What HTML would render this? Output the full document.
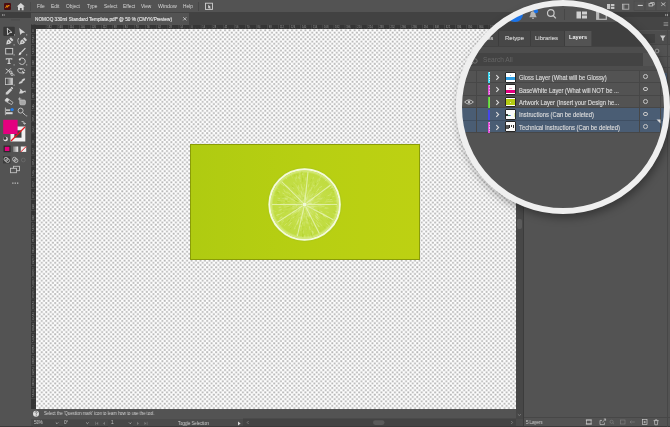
<!DOCTYPE html>
<html><head><meta charset="utf-8">
<style>
*{margin:0;padding:0;box-sizing:border-box}
html,body{width:670px;height:427px;overflow:hidden;background:#535353}
body{font-family:"Liberation Sans",sans-serif;color:#d6d6d6;position:relative}
.a{position:absolute}
.t{position:absolute;white-space:nowrap;line-height:1;will-change:transform}
</style></head><body>

<!-- menubar -->
<div class="a" style="left:0;top:0;width:670px;height:12px;background:#535353"></div>
<svg class="a" style="left:0;top:0" width="31" height="12" viewBox="0 0 31 12">
<rect x="4" y="3" width="7" height="7" rx="1" fill="#4a0d12"/>
<path d="M5.6 8 L6.9 5.4 L7.6 7.3 L8.6 5 L9.6 6.2" fill="none" stroke="#ff9a00" stroke-width="0.9"/>
<path d="M20.8 3 L16.8 6.6 H18 V10.2 H19.9 V8 H21.7 V10.2 H23.6 V6.6 H24.8 Z" fill="#d8d8d8"/>
</svg>
<div class="a" style="left:30.2px;top:2px;width:0.8px;height:8.5px;background:#4a4a4a"></div>
<div class="t" style="left:37px;top:4.9px;font-size:4.8px;transform:scaleY(1.15);transform-origin:0 100%">File</div>
<div class="t" style="left:51px;top:4.9px;font-size:4.8px;transform:scaleY(1.15);transform-origin:0 100%">Edit</div>
<div class="t" style="left:66px;top:4.9px;font-size:4.8px;transform:scaleY(1.15);transform-origin:0 100%">Object</div>
<div class="t" style="left:87px;top:4.9px;font-size:4.8px;transform:scaleY(1.15);transform-origin:0 100%">Type</div>
<div class="t" style="left:104px;top:4.9px;font-size:4.8px;transform:scaleY(1.15);transform-origin:0 100%">Select</div>
<div class="t" style="left:122.8px;top:4.9px;font-size:4.8px;transform:scaleY(1.15);transform-origin:0 100%">Effect</div>
<div class="t" style="left:141px;top:4.9px;font-size:4.8px;transform:scaleY(1.15);transform-origin:0 100%">View</div>
<div class="t" style="left:158px;top:4.9px;font-size:4.8px;transform:scale(1.1,1.15);transform-origin:0 100%">Window</div>
<div class="t" style="left:183px;top:4.9px;font-size:4.8px;transform:scaleY(1.15);transform-origin:0 100%">Help</div>
<div class="a" style="left:197.5px;top:1.5px;width:0.8px;height:9px;background:#474747"></div>
<svg class="a" style="left:203.6px;top:2px" width="10" height="9" viewBox="0 0 10 9"><rect x="1.5" y="1.2" width="7" height="6.2" fill="none" stroke="#cfcfcf" stroke-width="0.9"/><path d="M4.2 2.8 L4.2 6.6 L5.1 5.7 L6 7.2 L6.6 6.9 L5.9 5.4 L7 5.3 Z" fill="#cfcfcf"/></svg>
<svg class="a" style="left:600px;top:0" width="70" height="12" viewBox="600 0 70 12">
<g fill="#c8c8c8"><rect x="607" y="4" width="3.2" height="5"/><rect x="611" y="4" width="3.4" height="2.2"/><rect x="611" y="6.9" width="3.4" height="2.1"/></g>
<g fill="none" stroke="#b8b8b8" stroke-width="0.8"><rect x="622.4" y="4.2" width="6.4" height="5"/><path d="M623.8 4.2 V9.2"/></g>
<g fill="none" stroke="#474747" stroke-width="0.5"><rect x="634" y="1" width="11" height="9.5"/><rect x="645" y="1" width="11" height="9.5"/><rect x="656" y="1" width="11" height="9.5"/></g>
<rect x="637.8" y="4.9" width="5" height="1.1" fill="#c8c8c8"/>
<g fill="none" stroke="#c8c8c8" stroke-width="0.8"><rect x="649" y="3.6" width="3.6" height="2.4"/><path d="M650.6 3.6 V2.6 H654.2 V5 H652.6"/><path d="M661.2 2.6 L665.4 5.8 M665.4 2.6 L661.2 5.8"/></g>
</svg>

<!-- toolbar -->
<div class="a" style="left:0;top:12px;width:30.5px;height:415px;background:#535353"></div>
<div class="a" style="left:0;top:12px;width:30.5px;height:5.5px;background:#3e3e3e"></div>
<div class="a" style="left:30.5px;top:12px;width:1px;height:415px;background:#3b3b3b"></div>

<svg class="a" style="left:0;top:0" width="31" height="200" viewBox="0 0 31 200">
<defs>
<linearGradient id="gr1"><stop offset="0" stop-color="#303030"/><stop offset="1" stop-color="#d8d8d8"/></linearGradient>
<linearGradient id="gr2"><stop offset="0" stop-color="#777"/><stop offset="1" stop-color="#f0f0f0"/></linearGradient>
<g id="nib"><path d="M0 0 L-2.1 -3.2 L-2.1 -5.6 H2.1 L2.1 -3.2 Z" fill="#d4d4d4"/><rect x="-1.9" y="-8.4" width="3.8" height="2.1" rx="0.4" fill="#d4d4d4"/><circle cx="0" cy="-3.4" r="0.6" fill="#535353"/></g>
</defs>
<g fill="#bdbdbd"><path d="M2.2 14 L3.4 15 L2.2 16 Z"/><path d="M3.8 14 L5 15 L3.8 16 Z"/></g>
<rect x="11" y="19.6" width="9" height="0.7" fill="#474747"/>
<rect x="3.3" y="26.7" width="11.5" height="9.2" rx="1" fill="#383838"/>
<path d="M7.3 28.2 L11.9 32.4 L9.4 32.7 L7.7 34.8 Z" fill="#2c2c2c" stroke="#d8d8d8" stroke-width="0.9" stroke-linejoin="round"/>
<path d="M19.2 28.1 L25.2 32.6 L22.1 32.9 L20.2 35 Z" fill="#d4d4d4"/>
<use href="#nib" transform="translate(6.2 44.6) rotate(45)"/>
<use href="#nib" transform="translate(19.8 44.6) rotate(45)"/>
<path d="M18.6 38 Q17 40.5 18.2 42.5 Q19 44 19.6 44.6" fill="none" stroke="#c8c8c8" stroke-width="0.8"/>
<rect x="5.7" y="48.4" width="7" height="5.6" fill="#4a4a4a" stroke="#cfcfcf" stroke-width="0.9"/>
<path d="M25 47.8 L25.8 48.6 L21.8 52.8 L20.8 51.9 Z" fill="#d4d4d4"/><path d="M20.6 52 L21.6 53 Q21 55.3 18.6 55.2 Q18.8 52.6 20.6 52 Z" fill="#e0e0e0"/>
<path d="M5.8 58.2 H12.3 V59.8 H11.4 V59.3 H9.7 V63 H10.6 V64 H7.5 V63 H8.4 V59.3 H6.7 V59.8 H5.8 Z" fill="#d4d4d4"/>
<path d="M19.4 59.4 A3.2 3.2 0 1 1 19.2 62.8" fill="none" stroke="#c8c8c8" stroke-width="1"/><circle cx="19.8" cy="59.6" r="1" fill="#e0e0e0"/>
<g fill="none" stroke="#d0d0d0" stroke-width="0.9"><circle cx="10.8" cy="72.2" r="1.2"/><circle cx="12" cy="74.4" r="1.1"/><path d="M5.8 69 L10 71.6 M5.8 73.6 L11 68.2"/></g>
<g fill="none" stroke="#c8c8c8" stroke-width="0.9"><path d="M22 68.8 Q17 67.6 17.8 71 Q18.6 73.4 22 73"/><path d="M20 69.4 Q24.6 67.6 24.8 71"/></g>
<path d="M22 70.6 L25.2 73 L23.7 73.2 L22.8 74.6 Z" fill="#e0e0e0"/>
<rect x="5.4" y="78.2" width="7" height="6.4" fill="url(#gr1)" stroke="#c8c8c8" stroke-width="0.8"/>
<path d="M18.6 84 L19.6 81.8 L21.4 81.2 L21.8 79.8 L23.8 78.6 L25.2 78.4 L24.8 80 L22.8 81.6 L22.2 83 L20.4 83.4 Z" fill="#d0d0d0"/>
<path d="M5.6 94.6 L6 92.6 L10.4 88.2 L12.2 90 L7.8 94.4 Z" fill="#cfcfcf"/><path d="M10.8 87.8 L11.8 86.8 L13.2 88.2 L12.2 89.2 Z" fill="#e0e0e0"/>
<path d="M19 93.6 L20.4 90 L19.6 88.4 L21.4 89.4 L23 91.2 L25.4 90.6 L26 92.4 L24.4 92 L22.2 93.4 Z" fill="#d0d0d0"/>
<path d="M5.4 99.4 L7 98 L13 102.4 L11.6 104.6 L5.2 101 Z" fill="none" stroke="#c8c8c8" stroke-width="0.8"/><path d="M5.4 99.4 L7 98 L9.4 99.8 L7.8 102 L5.2 101 Z" fill="#d8d8d8"/>
<path d="M19.6 97.4 V100.8 M18 99 H21.4" stroke="#c8c8c8" stroke-width="0.8"/><rect x="19.8" y="100" width="5.6" height="4.8" rx="1.2" fill="#a8a8a8" stroke="#c8c8c8" stroke-width="0.7"/>
<path d="M5.4 107.6 V115.2" stroke="#c8c8c8" stroke-width="0.8"/><rect x="6" y="109.4" width="4.2" height="1.4" fill="#d4d4d4"/><rect x="6" y="112.2" width="6.6" height="2" fill="#d4d4d4"/>
<circle cx="12.1" cy="109.6" r="1.7" fill="#2680eb"/>
<circle cx="20.6" cy="110.6" r="2.5" fill="none" stroke="#c8c8c8" stroke-width="0.9"/><path d="M22.5 112.5 L25.6 115.4" stroke="#c8c8c8" stroke-width="1"/>
<g fill="#c8c8c8"><rect x="14" y="34.4" width="1" height="1"/><rect x="26.2" y="34.4" width="1" height="1"/><rect x="13.6" y="44.4" width="1" height="1"/><rect x="13.6" y="54.4" width="1" height="1"/><rect x="26.2" y="54.4" width="1" height="1"/><rect x="13.6" y="64.4" width="1" height="1"/><rect x="26.2" y="64.4" width="1" height="1"/><rect x="13.6" y="74.6" width="1" height="1"/><rect x="13.6" y="84.6" width="1" height="1"/><rect x="26.2" y="115.4" width="1" height="1"/></g>
<!-- fill / stroke -->
<rect x="10.5" y="126.5" width="14.8" height="15" fill="#f0f0f0"/>
<rect x="14.3" y="130.3" width="7.2" height="7.4" fill="#424242"/>
<path d="M11 141 L25 127" stroke="#e8141c" stroke-width="1.2"/>
<rect x="3.2" y="119.8" width="14.4" height="14.2" fill="#e4007f"/>
<g fill="none" stroke="#c8c8c8" stroke-width="0.9"><path d="M21.6 121.5 Q24.5 121 24.6 124 M23.4 123 L24.6 124.4 L25.8 123"/></g>
<circle cx="5.6" cy="139" r="2.3" fill="#e0e0e0"/><circle cx="5" cy="138.4" r="1.4" fill="#333"/>
<rect x="3.6" y="145.6" width="7" height="6.6" fill="#2a2a2a"/><rect x="4.8" y="146.8" width="4.6" height="4.2" fill="#e4007f"/>
<rect x="13" y="146.5" width="5.2" height="5.4" fill="url(#gr2)"/>
<rect x="20.8" y="146.5" width="5.4" height="5.4" fill="#f0f0f0"/><path d="M20.8 151.9 L26.2 146.5" stroke="#e8141c" stroke-width="1"/>
<rect x="3" y="156.2" width="7.6" height="7.2" fill="#3c3c3c"/>
<g fill="none" stroke="#c8c8c8" stroke-width="0.8"><circle cx="6" cy="159.2" r="1.9"/><circle cx="7.6" cy="160.6" r="1.9"/><circle cx="14.4" cy="159.2" r="1.9"/><circle cx="16" cy="160.6" r="1.9"/></g>
<circle cx="23.3" cy="160" r="1.9" fill="none" stroke="#707070" stroke-width="0.7"/>
<g fill="none" stroke="#c0c0c0" stroke-width="0.9"><rect x="13.5" y="166.3" width="6" height="4.4"/><rect x="10.5" y="168.3" width="6" height="4.4" fill="#535353"/></g>
<g fill="#bdbdbd"><rect x="12.2" y="182.5" width="1.3" height="1.3"/><rect x="14.6" y="182.5" width="1.3" height="1.3"/><rect x="17" y="182.5" width="1.3" height="1.3"/></g>
</svg>
<!-- doc tab bar -->
<div class="a" style="left:31px;top:12px;width:491px;height:12.5px;background:#424242"></div>
<div class="a" style="left:31px;top:12.5px;width:157.5px;height:12px;background:#535353"></div>
<div class="t" style="left:35px;top:17.6px;font-size:4.72px;color:#e6e6e6;-webkit-text-stroke:0.12px #e6e6e6;transform:scaleY(1.12);transform-origin:0 100%">NOMOQ 330ml Standard Template.pdf* @ 50 % (CMYK/Preview)</div>
<svg class="a" style="left:181.5px;top:15.8px" width="6" height="6" viewBox="0 0 6 6"><path d="M1.2 1.2 L4.4 4.4 M4.4 1.2 L1.2 4.4" stroke="#e0e0e0" stroke-width="0.7"/></svg>

<!-- rulers -->
<div class="a" style="left:31px;top:24.5px;width:485px;height:4.5px;background:#353535"></div>
<div class="a" style="left:31px;top:24.5px;width:4.5px;height:384.5px;background:#353535"></div>
<svg class="a" style="left:0;top:0" width="520" height="410" viewBox="0 0 520 410">
<g><rect x="45.84" y="24.5" width="0.5" height="5" fill="#5a5a5a"/><rect x="48.66" y="28" width="0.4" height="1.0" fill="#505050"/><rect x="51.42" y="27.4" width="0.4" height="1.6" fill="#505050"/><rect x="54.19" y="28" width="0.4" height="1.0" fill="#505050"/><rect x="56.91" y="24.5" width="0.5" height="5" fill="#5a5a5a"/><rect x="59.73" y="28" width="0.4" height="1.0" fill="#505050"/><rect x="62.49" y="27.4" width="0.4" height="1.6" fill="#505050"/><rect x="65.26" y="28" width="0.4" height="1.0" fill="#505050"/><rect x="67.98" y="24.5" width="0.5" height="5" fill="#5a5a5a"/><rect x="70.80" y="28" width="0.4" height="1.0" fill="#505050"/><rect x="73.56" y="27.4" width="0.4" height="1.6" fill="#505050"/><rect x="76.33" y="28" width="0.4" height="1.0" fill="#505050"/><rect x="79.05" y="24.5" width="0.5" height="5" fill="#5a5a5a"/><rect x="81.87" y="28" width="0.4" height="1.0" fill="#505050"/><rect x="84.63" y="27.4" width="0.4" height="1.6" fill="#505050"/><rect x="87.40" y="28" width="0.4" height="1.0" fill="#505050"/><rect x="90.12" y="24.5" width="0.5" height="5" fill="#5a5a5a"/><rect x="92.94" y="28" width="0.4" height="1.0" fill="#505050"/><rect x="95.70" y="27.4" width="0.4" height="1.6" fill="#505050"/><rect x="98.47" y="28" width="0.4" height="1.0" fill="#505050"/><rect x="101.19" y="24.5" width="0.5" height="5" fill="#5a5a5a"/><rect x="104.01" y="28" width="0.4" height="1.0" fill="#505050"/><rect x="106.77" y="27.4" width="0.4" height="1.6" fill="#505050"/><rect x="109.54" y="28" width="0.4" height="1.0" fill="#505050"/><rect x="112.26" y="24.5" width="0.5" height="5" fill="#5a5a5a"/><rect x="115.08" y="28" width="0.4" height="1.0" fill="#505050"/><rect x="117.84" y="27.4" width="0.4" height="1.6" fill="#505050"/><rect x="120.61" y="28" width="0.4" height="1.0" fill="#505050"/><rect x="123.33" y="24.5" width="0.5" height="5" fill="#5a5a5a"/><rect x="126.15" y="28" width="0.4" height="1.0" fill="#505050"/><rect x="128.92" y="27.4" width="0.4" height="1.6" fill="#505050"/><rect x="131.68" y="28" width="0.4" height="1.0" fill="#505050"/><rect x="134.40" y="24.5" width="0.5" height="5" fill="#5a5a5a"/><rect x="137.22" y="28" width="0.4" height="1.0" fill="#505050"/><rect x="139.99" y="27.4" width="0.4" height="1.6" fill="#505050"/><rect x="142.75" y="28" width="0.4" height="1.0" fill="#505050"/><rect x="145.47" y="24.5" width="0.5" height="5" fill="#5a5a5a"/><rect x="148.29" y="28" width="0.4" height="1.0" fill="#505050"/><rect x="151.06" y="27.4" width="0.4" height="1.6" fill="#505050"/><rect x="153.82" y="28" width="0.4" height="1.0" fill="#505050"/><rect x="156.54" y="24.5" width="0.5" height="5" fill="#5a5a5a"/><rect x="159.36" y="28" width="0.4" height="1.0" fill="#505050"/><rect x="162.12" y="27.4" width="0.4" height="1.6" fill="#505050"/><rect x="164.89" y="28" width="0.4" height="1.0" fill="#505050"/><rect x="167.61" y="24.5" width="0.5" height="5" fill="#5a5a5a"/><rect x="170.43" y="28" width="0.4" height="1.0" fill="#505050"/><rect x="173.20" y="27.4" width="0.4" height="1.6" fill="#505050"/><rect x="175.96" y="28" width="0.4" height="1.0" fill="#505050"/><rect x="178.68" y="24.5" width="0.5" height="5" fill="#5a5a5a"/><rect x="181.50" y="28" width="0.4" height="1.0" fill="#505050"/><rect x="184.27" y="27.4" width="0.4" height="1.6" fill="#505050"/><rect x="187.03" y="28" width="0.4" height="1.0" fill="#505050"/><rect x="189.75" y="24.5" width="0.5" height="5" fill="#5a5a5a"/><rect x="192.57" y="28" width="0.4" height="1.0" fill="#505050"/><rect x="195.34" y="27.4" width="0.4" height="1.6" fill="#505050"/><rect x="198.10" y="28" width="0.4" height="1.0" fill="#505050"/><rect x="200.82" y="24.5" width="0.5" height="5" fill="#5a5a5a"/><rect x="203.64" y="28" width="0.4" height="1.0" fill="#505050"/><rect x="206.41" y="27.4" width="0.4" height="1.6" fill="#505050"/><rect x="209.17" y="28" width="0.4" height="1.0" fill="#505050"/><rect x="211.89" y="24.5" width="0.5" height="5" fill="#5a5a5a"/><rect x="214.71" y="28" width="0.4" height="1.0" fill="#505050"/><rect x="217.47" y="27.4" width="0.4" height="1.6" fill="#505050"/><rect x="220.24" y="28" width="0.4" height="1.0" fill="#505050"/><rect x="222.96" y="24.5" width="0.5" height="5" fill="#5a5a5a"/><rect x="225.78" y="28" width="0.4" height="1.0" fill="#505050"/><rect x="228.55" y="27.4" width="0.4" height="1.6" fill="#505050"/><rect x="231.31" y="28" width="0.4" height="1.0" fill="#505050"/><rect x="234.03" y="24.5" width="0.5" height="5" fill="#5a5a5a"/><rect x="236.85" y="28" width="0.4" height="1.0" fill="#505050"/><rect x="239.62" y="27.4" width="0.4" height="1.6" fill="#505050"/><rect x="242.38" y="28" width="0.4" height="1.0" fill="#505050"/><rect x="245.10" y="24.5" width="0.5" height="5" fill="#5a5a5a"/><rect x="247.92" y="28" width="0.4" height="1.0" fill="#505050"/><rect x="250.69" y="27.4" width="0.4" height="1.6" fill="#505050"/><rect x="253.45" y="28" width="0.4" height="1.0" fill="#505050"/><rect x="256.17" y="24.5" width="0.5" height="5" fill="#5a5a5a"/><rect x="258.99" y="28" width="0.4" height="1.0" fill="#505050"/><rect x="261.76" y="27.4" width="0.4" height="1.6" fill="#505050"/><rect x="264.52" y="28" width="0.4" height="1.0" fill="#505050"/><rect x="267.24" y="24.5" width="0.5" height="5" fill="#5a5a5a"/><rect x="270.06" y="28" width="0.4" height="1.0" fill="#505050"/><rect x="272.83" y="27.4" width="0.4" height="1.6" fill="#505050"/><rect x="275.59" y="28" width="0.4" height="1.0" fill="#505050"/><rect x="278.31" y="24.5" width="0.5" height="5" fill="#5a5a5a"/><rect x="281.13" y="28" width="0.4" height="1.0" fill="#505050"/><rect x="283.90" y="27.4" width="0.4" height="1.6" fill="#505050"/><rect x="286.66" y="28" width="0.4" height="1.0" fill="#505050"/><rect x="289.38" y="24.5" width="0.5" height="5" fill="#5a5a5a"/><rect x="292.20" y="28" width="0.4" height="1.0" fill="#505050"/><rect x="294.97" y="27.4" width="0.4" height="1.6" fill="#505050"/><rect x="297.73" y="28" width="0.4" height="1.0" fill="#505050"/><rect x="300.45" y="24.5" width="0.5" height="5" fill="#5a5a5a"/><rect x="303.27" y="28" width="0.4" height="1.0" fill="#505050"/><rect x="306.04" y="27.4" width="0.4" height="1.6" fill="#505050"/><rect x="308.80" y="28" width="0.4" height="1.0" fill="#505050"/><rect x="311.52" y="24.5" width="0.5" height="5" fill="#5a5a5a"/><rect x="314.34" y="28" width="0.4" height="1.0" fill="#505050"/><rect x="317.11" y="27.4" width="0.4" height="1.6" fill="#505050"/><rect x="319.87" y="28" width="0.4" height="1.0" fill="#505050"/><rect x="322.59" y="24.5" width="0.5" height="5" fill="#5a5a5a"/><rect x="325.41" y="28" width="0.4" height="1.0" fill="#505050"/><rect x="328.18" y="27.4" width="0.4" height="1.6" fill="#505050"/><rect x="330.94" y="28" width="0.4" height="1.0" fill="#505050"/><rect x="333.66" y="24.5" width="0.5" height="5" fill="#5a5a5a"/><rect x="336.48" y="28" width="0.4" height="1.0" fill="#505050"/><rect x="339.25" y="27.4" width="0.4" height="1.6" fill="#505050"/><rect x="342.01" y="28" width="0.4" height="1.0" fill="#505050"/><rect x="344.73" y="24.5" width="0.5" height="5" fill="#5a5a5a"/><rect x="347.55" y="28" width="0.4" height="1.0" fill="#505050"/><rect x="350.32" y="27.4" width="0.4" height="1.6" fill="#505050"/><rect x="353.08" y="28" width="0.4" height="1.0" fill="#505050"/><rect x="355.80" y="24.5" width="0.5" height="5" fill="#5a5a5a"/><rect x="358.62" y="28" width="0.4" height="1.0" fill="#505050"/><rect x="361.39" y="27.4" width="0.4" height="1.6" fill="#505050"/><rect x="364.15" y="28" width="0.4" height="1.0" fill="#505050"/><rect x="366.87" y="24.5" width="0.5" height="5" fill="#5a5a5a"/><rect x="369.69" y="28" width="0.4" height="1.0" fill="#505050"/><rect x="372.46" y="27.4" width="0.4" height="1.6" fill="#505050"/><rect x="375.22" y="28" width="0.4" height="1.0" fill="#505050"/><rect x="377.94" y="24.5" width="0.5" height="5" fill="#5a5a5a"/><rect x="380.76" y="28" width="0.4" height="1.0" fill="#505050"/><rect x="383.53" y="27.4" width="0.4" height="1.6" fill="#505050"/><rect x="386.29" y="28" width="0.4" height="1.0" fill="#505050"/><rect x="389.01" y="24.5" width="0.5" height="5" fill="#5a5a5a"/><rect x="391.83" y="28" width="0.4" height="1.0" fill="#505050"/><rect x="394.60" y="27.4" width="0.4" height="1.6" fill="#505050"/><rect x="397.36" y="28" width="0.4" height="1.0" fill="#505050"/><rect x="400.08" y="24.5" width="0.5" height="5" fill="#5a5a5a"/><rect x="402.90" y="28" width="0.4" height="1.0" fill="#505050"/><rect x="405.67" y="27.4" width="0.4" height="1.6" fill="#505050"/><rect x="408.43" y="28" width="0.4" height="1.0" fill="#505050"/><rect x="411.15" y="24.5" width="0.5" height="5" fill="#5a5a5a"/><rect x="413.97" y="28" width="0.4" height="1.0" fill="#505050"/><rect x="416.74" y="27.4" width="0.4" height="1.6" fill="#505050"/><rect x="419.50" y="28" width="0.4" height="1.0" fill="#505050"/><rect x="422.22" y="24.5" width="0.5" height="5" fill="#5a5a5a"/><rect x="425.04" y="28" width="0.4" height="1.0" fill="#505050"/><rect x="427.81" y="27.4" width="0.4" height="1.6" fill="#505050"/><rect x="430.57" y="28" width="0.4" height="1.0" fill="#505050"/><rect x="433.29" y="24.5" width="0.5" height="5" fill="#5a5a5a"/><rect x="436.11" y="28" width="0.4" height="1.0" fill="#505050"/><rect x="438.88" y="27.4" width="0.4" height="1.6" fill="#505050"/><rect x="441.64" y="28" width="0.4" height="1.0" fill="#505050"/><rect x="444.36" y="24.5" width="0.5" height="5" fill="#5a5a5a"/><rect x="447.18" y="28" width="0.4" height="1.0" fill="#505050"/><rect x="449.95" y="27.4" width="0.4" height="1.6" fill="#505050"/><rect x="452.71" y="28" width="0.4" height="1.0" fill="#505050"/><rect x="455.43" y="24.5" width="0.5" height="5" fill="#5a5a5a"/><rect x="458.25" y="28" width="0.4" height="1.0" fill="#505050"/><rect x="461.02" y="27.4" width="0.4" height="1.6" fill="#505050"/><rect x="463.78" y="28" width="0.4" height="1.0" fill="#505050"/><rect x="466.50" y="24.5" width="0.5" height="5" fill="#5a5a5a"/><rect x="469.32" y="28" width="0.4" height="1.0" fill="#505050"/><rect x="472.09" y="27.4" width="0.4" height="1.6" fill="#505050"/><rect x="474.85" y="28" width="0.4" height="1.0" fill="#505050"/><rect x="477.57" y="24.5" width="0.5" height="5" fill="#5a5a5a"/><rect x="480.39" y="28" width="0.4" height="1.0" fill="#505050"/><rect x="483.16" y="27.4" width="0.4" height="1.6" fill="#505050"/><rect x="485.92" y="28" width="0.4" height="1.0" fill="#505050"/><rect x="488.64" y="24.5" width="0.5" height="5" fill="#5a5a5a"/><rect x="491.46" y="28" width="0.4" height="1.0" fill="#505050"/><rect x="494.23" y="27.4" width="0.4" height="1.6" fill="#505050"/><rect x="496.99" y="28" width="0.4" height="1.0" fill="#505050"/><rect x="499.71" y="24.5" width="0.5" height="5" fill="#5a5a5a"/><rect x="502.53" y="28" width="0.4" height="1.0" fill="#505050"/><rect x="505.30" y="27.4" width="0.4" height="1.6" fill="#505050"/><rect x="508.06" y="28" width="0.4" height="1.0" fill="#505050"/><rect x="510.78" y="24.5" width="0.5" height="5" fill="#5a5a5a"/><rect x="513.60" y="28" width="0.4" height="1.0" fill="#505050"/><rect x="31" y="33.05" width="4.5" height="0.5" fill="#5a5a5a"/><rect x="34.5" y="35.87" width="1.0" height="0.4" fill="#505050"/><rect x="33.9" y="38.63" width="1.6" height="0.4" fill="#505050"/><rect x="34.5" y="41.40" width="1.0" height="0.4" fill="#505050"/><rect x="31" y="44.12" width="4.5" height="0.5" fill="#5a5a5a"/><rect x="34.5" y="46.94" width="1.0" height="0.4" fill="#505050"/><rect x="33.9" y="49.70" width="1.6" height="0.4" fill="#505050"/><rect x="34.5" y="52.47" width="1.0" height="0.4" fill="#505050"/><rect x="31" y="55.19" width="4.5" height="0.5" fill="#5a5a5a"/><rect x="34.5" y="58.01" width="1.0" height="0.4" fill="#505050"/><rect x="33.9" y="60.77" width="1.6" height="0.4" fill="#505050"/><rect x="34.5" y="63.54" width="1.0" height="0.4" fill="#505050"/><rect x="31" y="66.26" width="4.5" height="0.5" fill="#5a5a5a"/><rect x="34.5" y="69.08" width="1.0" height="0.4" fill="#505050"/><rect x="33.9" y="71.84" width="1.6" height="0.4" fill="#505050"/><rect x="34.5" y="74.61" width="1.0" height="0.4" fill="#505050"/><rect x="31" y="77.33" width="4.5" height="0.5" fill="#5a5a5a"/><rect x="34.5" y="80.15" width="1.0" height="0.4" fill="#505050"/><rect x="33.9" y="82.91" width="1.6" height="0.4" fill="#505050"/><rect x="34.5" y="85.68" width="1.0" height="0.4" fill="#505050"/><rect x="31" y="88.40" width="4.5" height="0.5" fill="#5a5a5a"/><rect x="34.5" y="91.22" width="1.0" height="0.4" fill="#505050"/><rect x="33.9" y="93.98" width="1.6" height="0.4" fill="#505050"/><rect x="34.5" y="96.75" width="1.0" height="0.4" fill="#505050"/><rect x="31" y="99.47" width="4.5" height="0.5" fill="#5a5a5a"/><rect x="34.5" y="102.29" width="1.0" height="0.4" fill="#505050"/><rect x="33.9" y="105.05" width="1.6" height="0.4" fill="#505050"/><rect x="34.5" y="107.82" width="1.0" height="0.4" fill="#505050"/><rect x="31" y="110.54" width="4.5" height="0.5" fill="#5a5a5a"/><rect x="34.5" y="113.36" width="1.0" height="0.4" fill="#505050"/><rect x="33.9" y="116.12" width="1.6" height="0.4" fill="#505050"/><rect x="34.5" y="118.89" width="1.0" height="0.4" fill="#505050"/><rect x="31" y="121.61" width="4.5" height="0.5" fill="#5a5a5a"/><rect x="34.5" y="124.43" width="1.0" height="0.4" fill="#505050"/><rect x="33.9" y="127.19" width="1.6" height="0.4" fill="#505050"/><rect x="34.5" y="129.96" width="1.0" height="0.4" fill="#505050"/><rect x="31" y="132.68" width="4.5" height="0.5" fill="#5a5a5a"/><rect x="34.5" y="135.50" width="1.0" height="0.4" fill="#505050"/><rect x="33.9" y="138.27" width="1.6" height="0.4" fill="#505050"/><rect x="34.5" y="141.03" width="1.0" height="0.4" fill="#505050"/><rect x="31" y="143.75" width="4.5" height="0.5" fill="#5a5a5a"/><rect x="34.5" y="146.57" width="1.0" height="0.4" fill="#505050"/><rect x="33.9" y="149.34" width="1.6" height="0.4" fill="#505050"/><rect x="34.5" y="152.10" width="1.0" height="0.4" fill="#505050"/><rect x="31" y="154.82" width="4.5" height="0.5" fill="#5a5a5a"/><rect x="34.5" y="157.64" width="1.0" height="0.4" fill="#505050"/><rect x="33.9" y="160.41" width="1.6" height="0.4" fill="#505050"/><rect x="34.5" y="163.17" width="1.0" height="0.4" fill="#505050"/><rect x="31" y="165.89" width="4.5" height="0.5" fill="#5a5a5a"/><rect x="34.5" y="168.71" width="1.0" height="0.4" fill="#505050"/><rect x="33.9" y="171.47" width="1.6" height="0.4" fill="#505050"/><rect x="34.5" y="174.24" width="1.0" height="0.4" fill="#505050"/><rect x="31" y="176.96" width="4.5" height="0.5" fill="#5a5a5a"/><rect x="34.5" y="179.78" width="1.0" height="0.4" fill="#505050"/><rect x="33.9" y="182.55" width="1.6" height="0.4" fill="#505050"/><rect x="34.5" y="185.31" width="1.0" height="0.4" fill="#505050"/><rect x="31" y="188.03" width="4.5" height="0.5" fill="#5a5a5a"/><rect x="34.5" y="190.85" width="1.0" height="0.4" fill="#505050"/><rect x="33.9" y="193.62" width="1.6" height="0.4" fill="#505050"/><rect x="34.5" y="196.38" width="1.0" height="0.4" fill="#505050"/><rect x="31" y="199.10" width="4.5" height="0.5" fill="#5a5a5a"/><rect x="34.5" y="201.92" width="1.0" height="0.4" fill="#505050"/><rect x="33.9" y="204.69" width="1.6" height="0.4" fill="#505050"/><rect x="34.5" y="207.45" width="1.0" height="0.4" fill="#505050"/><rect x="31" y="210.17" width="4.5" height="0.5" fill="#5a5a5a"/><rect x="34.5" y="212.99" width="1.0" height="0.4" fill="#505050"/><rect x="33.9" y="215.76" width="1.6" height="0.4" fill="#505050"/><rect x="34.5" y="218.52" width="1.0" height="0.4" fill="#505050"/><rect x="31" y="221.24" width="4.5" height="0.5" fill="#5a5a5a"/><rect x="34.5" y="224.06" width="1.0" height="0.4" fill="#505050"/><rect x="33.9" y="226.83" width="1.6" height="0.4" fill="#505050"/><rect x="34.5" y="229.59" width="1.0" height="0.4" fill="#505050"/><rect x="31" y="232.31" width="4.5" height="0.5" fill="#5a5a5a"/><rect x="34.5" y="235.13" width="1.0" height="0.4" fill="#505050"/><rect x="33.9" y="237.90" width="1.6" height="0.4" fill="#505050"/><rect x="34.5" y="240.66" width="1.0" height="0.4" fill="#505050"/><rect x="31" y="243.38" width="4.5" height="0.5" fill="#5a5a5a"/><rect x="34.5" y="246.20" width="1.0" height="0.4" fill="#505050"/><rect x="33.9" y="248.97" width="1.6" height="0.4" fill="#505050"/><rect x="34.5" y="251.73" width="1.0" height="0.4" fill="#505050"/><rect x="31" y="254.45" width="4.5" height="0.5" fill="#5a5a5a"/><rect x="34.5" y="257.27" width="1.0" height="0.4" fill="#505050"/><rect x="33.9" y="260.04" width="1.6" height="0.4" fill="#505050"/><rect x="34.5" y="262.80" width="1.0" height="0.4" fill="#505050"/><rect x="31" y="265.52" width="4.5" height="0.5" fill="#5a5a5a"/><rect x="34.5" y="268.34" width="1.0" height="0.4" fill="#505050"/><rect x="33.9" y="271.11" width="1.6" height="0.4" fill="#505050"/><rect x="34.5" y="273.87" width="1.0" height="0.4" fill="#505050"/><rect x="31" y="276.59" width="4.5" height="0.5" fill="#5a5a5a"/><rect x="34.5" y="279.41" width="1.0" height="0.4" fill="#505050"/><rect x="33.9" y="282.18" width="1.6" height="0.4" fill="#505050"/><rect x="34.5" y="284.94" width="1.0" height="0.4" fill="#505050"/><rect x="31" y="287.66" width="4.5" height="0.5" fill="#5a5a5a"/><rect x="34.5" y="290.48" width="1.0" height="0.4" fill="#505050"/><rect x="33.9" y="293.25" width="1.6" height="0.4" fill="#505050"/><rect x="34.5" y="296.01" width="1.0" height="0.4" fill="#505050"/><rect x="31" y="298.73" width="4.5" height="0.5" fill="#5a5a5a"/><rect x="34.5" y="301.55" width="1.0" height="0.4" fill="#505050"/><rect x="33.9" y="304.32" width="1.6" height="0.4" fill="#505050"/><rect x="34.5" y="307.08" width="1.0" height="0.4" fill="#505050"/><rect x="31" y="309.80" width="4.5" height="0.5" fill="#5a5a5a"/><rect x="34.5" y="312.62" width="1.0" height="0.4" fill="#505050"/><rect x="33.9" y="315.39" width="1.6" height="0.4" fill="#505050"/><rect x="34.5" y="318.15" width="1.0" height="0.4" fill="#505050"/><rect x="31" y="320.87" width="4.5" height="0.5" fill="#5a5a5a"/><rect x="34.5" y="323.69" width="1.0" height="0.4" fill="#505050"/><rect x="33.9" y="326.46" width="1.6" height="0.4" fill="#505050"/><rect x="34.5" y="329.22" width="1.0" height="0.4" fill="#505050"/><rect x="31" y="331.94" width="4.5" height="0.5" fill="#5a5a5a"/><rect x="34.5" y="334.76" width="1.0" height="0.4" fill="#505050"/><rect x="33.9" y="337.53" width="1.6" height="0.4" fill="#505050"/><rect x="34.5" y="340.29" width="1.0" height="0.4" fill="#505050"/><rect x="31" y="343.01" width="4.5" height="0.5" fill="#5a5a5a"/><rect x="34.5" y="345.83" width="1.0" height="0.4" fill="#505050"/><rect x="33.9" y="348.60" width="1.6" height="0.4" fill="#505050"/><rect x="34.5" y="351.36" width="1.0" height="0.4" fill="#505050"/><rect x="31" y="354.08" width="4.5" height="0.5" fill="#5a5a5a"/><rect x="34.5" y="356.90" width="1.0" height="0.4" fill="#505050"/><rect x="33.9" y="359.67" width="1.6" height="0.4" fill="#505050"/><rect x="34.5" y="362.43" width="1.0" height="0.4" fill="#505050"/><rect x="31" y="365.15" width="4.5" height="0.5" fill="#5a5a5a"/><rect x="34.5" y="367.97" width="1.0" height="0.4" fill="#505050"/><rect x="33.9" y="370.74" width="1.6" height="0.4" fill="#505050"/><rect x="34.5" y="373.50" width="1.0" height="0.4" fill="#505050"/><rect x="31" y="376.22" width="4.5" height="0.5" fill="#5a5a5a"/><rect x="34.5" y="379.04" width="1.0" height="0.4" fill="#505050"/><rect x="33.9" y="381.81" width="1.6" height="0.4" fill="#505050"/><rect x="34.5" y="384.57" width="1.0" height="0.4" fill="#505050"/><rect x="31" y="387.29" width="4.5" height="0.5" fill="#5a5a5a"/><rect x="34.5" y="390.11" width="1.0" height="0.4" fill="#505050"/><rect x="33.9" y="392.88" width="1.6" height="0.4" fill="#505050"/><rect x="34.5" y="395.64" width="1.0" height="0.4" fill="#505050"/><rect x="31" y="398.36" width="4.5" height="0.5" fill="#5a5a5a"/><rect x="34.5" y="401.18" width="1.0" height="0.4" fill="#505050"/><rect x="33.9" y="403.95" width="1.6" height="0.4" fill="#505050"/><rect x="34.5" y="406.71" width="1.0" height="0.4" fill="#505050"/></g>
<g font-family="Liberation Sans" font-size="2.6" fill="#9a9a9a"><text x="47.29" y="27.9">182</text><text x="58.36" y="27.9">168</text><text x="69.43" y="27.9">154</text><text x="80.50" y="27.9">140</text><text x="91.57" y="27.9">126</text><text x="102.64" y="27.9">112</text><text x="113.71" y="27.9">98</text><text x="124.78" y="27.9">84</text><text x="135.85" y="27.9">70</text><text x="146.92" y="27.9">56</text><text x="157.99" y="27.9">42</text><text x="169.06" y="27.9">28</text><text x="180.13" y="27.9">14</text><text x="191.20" y="27.9">0</text><text x="202.27" y="27.9">14</text><text x="213.34" y="27.9">28</text><text x="224.41" y="27.9">42</text><text x="235.48" y="27.9">56</text><text x="246.55" y="27.9">70</text><text x="257.62" y="27.9">84</text><text x="268.69" y="27.9">98</text><text x="279.76" y="27.9">112</text><text x="290.83" y="27.9">126</text><text x="301.90" y="27.9">140</text><text x="312.97" y="27.9">154</text><text x="324.04" y="27.9">168</text><text x="335.11" y="27.9">182</text><text x="346.18" y="27.9">196</text><text x="357.25" y="27.9">210</text><text x="368.32" y="27.9">224</text><text x="379.39" y="27.9">238</text><text x="390.46" y="27.9">252</text><text x="401.53" y="27.9">266</text><text x="412.60" y="27.9">280</text><text x="423.67" y="27.9">294</text><text x="434.74" y="27.9">308</text><text x="445.81" y="27.9">322</text><text x="456.88" y="27.9">336</text><text x="467.95" y="27.9">350</text><text x="479.02" y="27.9">364</text><text x="490.09" y="27.9">378</text><text x="501.16" y="27.9">392</text><text x="512.23" y="27.9">406</text></g>
<g font-size="2.6" font-family="Liberation Sans" fill="#a8a8a8"><text x="32.2" y="26.80">1</text><text x="32.2" y="29.40">4</text><text x="32.2" y="32.00">0</text><text x="32.2" y="37.87">1</text><text x="32.2" y="40.47">2</text><text x="32.2" y="43.07">6</text><text x="32.2" y="48.94">1</text><text x="32.2" y="51.54">1</text><text x="32.2" y="54.14">2</text><text x="32.2" y="62.61">9</text><text x="32.2" y="65.21">8</text><text x="32.2" y="73.68">8</text><text x="32.2" y="76.28">4</text><text x="32.2" y="84.75">7</text><text x="32.2" y="87.35">0</text><text x="32.2" y="95.82">5</text><text x="32.2" y="98.42">6</text><text x="32.2" y="106.89">4</text><text x="32.2" y="109.49">2</text><text x="32.2" y="117.96">2</text><text x="32.2" y="120.56">8</text><text x="32.2" y="129.03">1</text><text x="32.2" y="131.63">4</text><text x="32.2" y="142.70">0</text><text x="32.2" y="151.17">1</text><text x="32.2" y="153.77">4</text><text x="32.2" y="162.24">2</text><text x="32.2" y="164.84">8</text><text x="32.2" y="173.31">4</text><text x="32.2" y="175.91">2</text><text x="32.2" y="184.38">5</text><text x="32.2" y="186.98">6</text><text x="32.2" y="195.45">7</text><text x="32.2" y="198.05">0</text><text x="32.2" y="206.52">8</text><text x="32.2" y="209.12">4</text><text x="32.2" y="217.59">9</text><text x="32.2" y="220.19">8</text><text x="32.2" y="226.06">1</text><text x="32.2" y="228.66">1</text><text x="32.2" y="231.26">2</text><text x="32.2" y="237.13">1</text><text x="32.2" y="239.73">2</text><text x="32.2" y="242.33">6</text><text x="32.2" y="248.20">1</text><text x="32.2" y="250.80">4</text><text x="32.2" y="253.40">0</text><text x="32.2" y="259.27">1</text><text x="32.2" y="261.87">5</text><text x="32.2" y="264.47">4</text><text x="32.2" y="270.34">1</text><text x="32.2" y="272.94">6</text><text x="32.2" y="275.54">8</text><text x="32.2" y="281.41">1</text><text x="32.2" y="284.01">8</text><text x="32.2" y="286.61">2</text><text x="32.2" y="292.48">1</text><text x="32.2" y="295.08">9</text><text x="32.2" y="297.68">6</text><text x="32.2" y="303.55">2</text><text x="32.2" y="306.15">1</text><text x="32.2" y="308.75">0</text><text x="32.2" y="314.62">2</text><text x="32.2" y="317.22">2</text><text x="32.2" y="319.82">4</text><text x="32.2" y="325.69">2</text><text x="32.2" y="328.29">3</text><text x="32.2" y="330.89">8</text><text x="32.2" y="336.76">2</text><text x="32.2" y="339.36">5</text><text x="32.2" y="341.96">2</text><text x="32.2" y="347.83">2</text><text x="32.2" y="350.43">6</text><text x="32.2" y="353.03">6</text><text x="32.2" y="358.90">2</text><text x="32.2" y="361.50">8</text><text x="32.2" y="364.10">0</text><text x="32.2" y="369.97">2</text><text x="32.2" y="372.57">9</text><text x="32.2" y="375.17">4</text><text x="32.2" y="381.04">3</text><text x="32.2" y="383.64">0</text><text x="32.2" y="386.24">8</text><text x="32.2" y="392.11">3</text><text x="32.2" y="394.71">2</text><text x="32.2" y="397.31">2</text></g><rect x="31" y="24.5" width="4.5" height="4.5" fill="#353535"/>
</svg>

<!-- canvas -->
<div class="a" style="left:35.5px;top:29px;width:480.5px;height:380px;overflow:hidden;background:#e6e6e6">
  <svg class="a" style="left:0;top:0" width="481" height="380"><defs><pattern id="ck" x="0.2" y="0.25" width="4.47" height="4.47" patternUnits="userSpaceOnUse"><rect width="4.47" height="4.47" fill="#ffffff"/><rect x="0.197" y="0.197" width="1.84" height="1.84" fill="#b4b4b4"/><rect x="2.432" y="2.432" width="1.84" height="1.84" fill="#b4b4b4"/></pattern></defs><rect width="481" height="380" fill="url(#ck)"/></svg>
</div>

<!-- artboard lime -->
<div class="a" style="left:190px;top:144px;width:230px;height:116px;background:linear-gradient(90deg,#afcb11,#b7cf12 50%,#bdd112);border:1px solid #8a9c08"></div>
<svg class="a" style="left:190px;top:144px" width="230" height="116" viewBox="190 144 230 116">
<defs><radialGradient id="fl" cx="304.6" cy="204.5" r="34" gradientUnits="userSpaceOnUse"><stop offset="0" stop-color="#d2e874"/><stop offset="0.5" stop-color="#c4de48"/><stop offset="0.92" stop-color="#c0dc40"/><stop offset="1" stop-color="#d8ec88"/></radialGradient></defs>
<circle cx="304.6" cy="204.5" r="37.4" fill="#aac41c" fill-opacity="0.6"/>
<circle cx="304.6" cy="204.5" r="36.6" fill="#b8d42a"/>
<circle cx="304.6" cy="204.5" r="35.2" fill="none" stroke="#f4fadc" stroke-width="2"/>
<circle cx="304.6" cy="204.5" r="34.2" fill="url(#fl)"/>
<g stroke="#aacb24" stroke-width="0.7"><line x1="286.8" y1="210.0" x2="282.2" y2="211.4" stroke-opacity="0.46"/><line x1="326.2" y1="218.3" x2="329.5" y2="220.5" stroke-opacity="0.27"/><line x1="308.2" y1="213.6" x2="308.8" y2="215.1" stroke-opacity="0.46"/><line x1="335.5" y1="204.0" x2="337.8" y2="204.0" stroke-opacity="0.57"/><line x1="330.4" y1="197.5" x2="331.9" y2="197.1" stroke-opacity="0.34"/><line x1="315.1" y1="210.9" x2="319.3" y2="213.4" stroke-opacity="0.59"/><line x1="313.2" y1="226.4" x2="313.9" y2="228.2" stroke-opacity="0.54"/><line x1="308.0" y1="218.1" x2="309.1" y2="222.5" stroke-opacity="0.54"/><line x1="320.9" y1="214.9" x2="322.9" y2="216.1" stroke-opacity="0.52"/><line x1="326.3" y1="190.4" x2="328.3" y2="189.1" stroke-opacity="0.34"/><line x1="333.7" y1="211.7" x2="335.9" y2="212.3" stroke-opacity="0.57"/><line x1="279.6" y1="194.7" x2="276.2" y2="193.4" stroke-opacity="0.38"/><line x1="298.6" y1="201.6" x2="296.1" y2="200.4" stroke-opacity="0.65"/><line x1="295.5" y1="176.0" x2="295.0" y2="174.5" stroke-opacity="0.54"/><line x1="302.8" y1="181.9" x2="302.4" y2="177.6" stroke-opacity="0.66"/><line x1="294.9" y1="194.8" x2="292.4" y2="192.3" stroke-opacity="0.52"/><line x1="280.0" y1="214.2" x2="278.3" y2="214.8" stroke-opacity="0.59"/><line x1="304.5" y1="207.8" x2="304.4" y2="210.4" stroke-opacity="0.56"/><line x1="309.4" y1="218.8" x2="310.8" y2="222.9" stroke-opacity="0.66"/><line x1="297.5" y1="175.8" x2="296.9" y2="173.4" stroke-opacity="0.33"/><line x1="320.2" y1="202.7" x2="321.9" y2="202.5" stroke-opacity="0.26"/><line x1="301.1" y1="205.5" x2="296.8" y2="206.8" stroke-opacity="0.36"/><line x1="301.2" y1="196.6" x2="299.9" y2="193.7" stroke-opacity="0.33"/><line x1="286.4" y1="188.6" x2="284.2" y2="186.7" stroke-opacity="0.61"/><line x1="291.1" y1="217.7" x2="287.8" y2="220.9" stroke-opacity="0.61"/><line x1="311.0" y1="232.0" x2="312.2" y2="236.8" stroke-opacity="0.69"/><line x1="281.3" y1="196.9" x2="278.3" y2="195.9" stroke-opacity="0.26"/><line x1="281.5" y1="202.1" x2="277.0" y2="201.6" stroke-opacity="0.56"/><line x1="293.3" y1="191.0" x2="290.4" y2="187.6" stroke-opacity="0.50"/><line x1="296.9" y1="200.7" x2="293.8" y2="199.2" stroke-opacity="0.48"/><line x1="302.8" y1="200.0" x2="301.6" y2="196.8" stroke-opacity="0.44"/><line x1="292.8" y1="206.2" x2="290.7" y2="206.6" stroke-opacity="0.53"/><line x1="292.1" y1="220.6" x2="290.9" y2="222.0" stroke-opacity="0.58"/><line x1="297.3" y1="203.1" x2="295.1" y2="202.7" stroke-opacity="0.53"/><line x1="314.3" y1="197.7" x2="316.4" y2="196.2" stroke-opacity="0.67"/><line x1="311.9" y1="191.6" x2="314.0" y2="187.9" stroke-opacity="0.31"/><line x1="280.4" y1="203.6" x2="277.1" y2="203.5" stroke-opacity="0.56"/><line x1="308.1" y1="212.5" x2="309.9" y2="216.6" stroke-opacity="0.70"/><line x1="289.6" y1="203.1" x2="286.0" y2="202.7" stroke-opacity="0.26"/><line x1="301.2" y1="204.2" x2="296.6" y2="203.9" stroke-opacity="0.61"/><line x1="303.1" y1="233.0" x2="302.9" y2="237.1" stroke-opacity="0.60"/><line x1="303.7" y1="199.6" x2="303.3" y2="196.9" stroke-opacity="0.46"/><line x1="294.4" y1="188.5" x2="292.6" y2="185.7" stroke-opacity="0.43"/><line x1="304.0" y1="218.7" x2="303.9" y2="220.4" stroke-opacity="0.34"/><line x1="325.5" y1="203.9" x2="329.8" y2="203.7" stroke-opacity="0.28"/><line x1="301.0" y1="201.5" x2="297.4" y2="198.4" stroke-opacity="0.44"/><line x1="303.6" y1="207.8" x2="303.0" y2="210.0" stroke-opacity="0.27"/><line x1="330.0" y1="217.1" x2="332.7" y2="218.5" stroke-opacity="0.46"/><line x1="299.7" y1="200.7" x2="296.7" y2="198.5" stroke-opacity="0.46"/><line x1="291.8" y1="197.2" x2="288.1" y2="195.1" stroke-opacity="0.49"/><line x1="297.9" y1="212.7" x2="295.4" y2="215.7" stroke-opacity="0.50"/><line x1="309.2" y1="205.7" x2="311.5" y2="206.3" stroke-opacity="0.44"/><line x1="293.1" y1="216.2" x2="291.6" y2="217.8" stroke-opacity="0.40"/><line x1="295.5" y1="209.2" x2="291.7" y2="211.2" stroke-opacity="0.42"/><line x1="327.2" y1="220.2" x2="328.6" y2="221.3" stroke-opacity="0.29"/><line x1="314.6" y1="210.2" x2="318.1" y2="212.1" stroke-opacity="0.56"/><line x1="330.2" y1="190.1" x2="333.5" y2="188.2" stroke-opacity="0.45"/><line x1="295.9" y1="214.4" x2="293.9" y2="216.5" stroke-opacity="0.42"/><line x1="312.6" y1="197.1" x2="313.7" y2="196.0" stroke-opacity="0.48"/><line x1="309.2" y1="207.2" x2="312.7" y2="209.2" stroke-opacity="0.65"/><line x1="280.4" y1="201.2" x2="277.6" y2="200.8" stroke-opacity="0.40"/><line x1="314.6" y1="185.3" x2="316.7" y2="181.3" stroke-opacity="0.61"/><line x1="298.4" y1="207.9" x2="294.8" y2="209.9" stroke-opacity="0.70"/><line x1="320.5" y1="218.5" x2="323.6" y2="221.2" stroke-opacity="0.33"/><line x1="306.7" y1="227.5" x2="307.0" y2="231.1" stroke-opacity="0.35"/><line x1="302.8" y1="232.3" x2="302.5" y2="237.0" stroke-opacity="0.40"/><line x1="287.4" y1="201.5" x2="285.0" y2="201.1" stroke-opacity="0.70"/><line x1="308.7" y1="210.7" x2="310.1" y2="212.9" stroke-opacity="0.37"/><line x1="330.6" y1="204.7" x2="335.1" y2="204.8" stroke-opacity="0.62"/><line x1="311.8" y1="195.5" x2="314.4" y2="192.2" stroke-opacity="0.44"/><line x1="300.2" y1="215.3" x2="299.5" y2="217.0" stroke-opacity="0.39"/><line x1="314.8" y1="185.8" x2="315.6" y2="184.5" stroke-opacity="0.42"/><line x1="296.3" y1="197.1" x2="294.2" y2="195.2" stroke-opacity="0.49"/><line x1="322.3" y1="198.1" x2="326.0" y2="196.8" stroke-opacity="0.40"/><line x1="314.8" y1="187.8" x2="315.7" y2="186.2" stroke-opacity="0.35"/><line x1="307.3" y1="178.7" x2="307.6" y2="175.8" stroke-opacity="0.40"/><line x1="316.8" y1="205.9" x2="319.5" y2="206.2" stroke-opacity="0.54"/><line x1="319.6" y1="194.0" x2="321.9" y2="192.4" stroke-opacity="0.48"/><line x1="298.6" y1="198.4" x2="297.4" y2="197.1" stroke-opacity="0.36"/><line x1="323.2" y1="225.8" x2="325.5" y2="228.4" stroke-opacity="0.50"/><line x1="297.9" y1="231.8" x2="297.3" y2="234.1" stroke-opacity="0.51"/><line x1="298.3" y1="194.8" x2="296.2" y2="191.5" stroke-opacity="0.58"/><line x1="297.5" y1="201.2" x2="294.5" y2="199.8" stroke-opacity="0.37"/><line x1="290.3" y1="207.2" x2="286.7" y2="207.9" stroke-opacity="0.56"/><line x1="278.7" y1="193.1" x2="275.6" y2="191.7" stroke-opacity="0.49"/><line x1="304.7" y1="193.0" x2="304.8" y2="189.4" stroke-opacity="0.28"/><line x1="299.7" y1="217.7" x2="298.9" y2="219.9" stroke-opacity="0.28"/><line x1="278.8" y1="193.0" x2="277.1" y2="192.2" stroke-opacity="0.61"/><line x1="325.0" y1="188.7" x2="327.3" y2="186.9" stroke-opacity="0.41"/><line x1="295.9" y1="206.0" x2="293.5" y2="206.4" stroke-opacity="0.67"/><line x1="310.7" y1="224.3" x2="311.4" y2="226.3" stroke-opacity="0.65"/><line x1="294.9" y1="176.9" x2="293.8" y2="174.0" stroke-opacity="0.29"/><line x1="289.6" y1="220.0" x2="286.4" y2="223.3" stroke-opacity="0.52"/><line x1="288.0" y1="211.0" x2="284.9" y2="212.2" stroke-opacity="0.27"/><line x1="301.3" y1="222.5" x2="300.9" y2="224.7" stroke-opacity="0.65"/><line x1="284.8" y1="197.2" x2="282.2" y2="196.3" stroke-opacity="0.55"/><line x1="306.0" y1="197.0" x2="306.7" y2="193.4" stroke-opacity="0.36"/><line x1="300.6" y1="204.5" x2="297.0" y2="204.5" stroke-opacity="0.57"/><line x1="302.5" y1="229.8" x2="302.4" y2="231.5" stroke-opacity="0.66"/><line x1="291.8" y1="192.3" x2="290.0" y2="190.6" stroke-opacity="0.51"/><line x1="318.0" y1="209.9" x2="320.6" y2="211.0" stroke-opacity="0.35"/><line x1="314.0" y1="206.9" x2="318.5" y2="208.0" stroke-opacity="0.31"/><line x1="305.9" y1="214.5" x2="306.3" y2="217.9" stroke-opacity="0.36"/><line x1="301.9" y1="200.8" x2="300.3" y2="198.6" stroke-opacity="0.56"/><line x1="307.3" y1="216.9" x2="307.8" y2="219.0" stroke-opacity="0.50"/><line x1="310.3" y1="197.9" x2="312.1" y2="195.7" stroke-opacity="0.28"/><line x1="302.3" y1="194.2" x2="301.7" y2="191.5" stroke-opacity="0.32"/><line x1="328.6" y1="218.3" x2="330.9" y2="219.6" stroke-opacity="0.60"/><line x1="298.9" y1="218.2" x2="297.6" y2="221.4" stroke-opacity="0.31"/><line x1="293.2" y1="212.2" x2="289.4" y2="214.8" stroke-opacity="0.35"/><line x1="315.8" y1="202.8" x2="319.6" y2="202.2" stroke-opacity="0.66"/><line x1="292.0" y1="210.6" x2="290.5" y2="211.4" stroke-opacity="0.42"/><line x1="305.0" y1="210.1" x2="305.1" y2="212.8" stroke-opacity="0.44"/><line x1="317.8" y1="210.0" x2="319.4" y2="210.7" stroke-opacity="0.47"/><line x1="303.0" y1="226.1" x2="302.8" y2="228.3" stroke-opacity="0.46"/><line x1="292.2" y1="212.3" x2="290.1" y2="213.6" stroke-opacity="0.62"/><line x1="311.7" y1="203.5" x2="313.9" y2="203.1" stroke-opacity="0.35"/><line x1="285.0" y1="198.4" x2="281.7" y2="197.4" stroke-opacity="0.62"/><line x1="330.0" y1="198.6" x2="332.0" y2="198.2" stroke-opacity="0.53"/><line x1="301.0" y1="211.6" x2="299.5" y2="214.5" stroke-opacity="0.31"/><line x1="318.8" y1="227.7" x2="321.2" y2="231.6" stroke-opacity="0.27"/><line x1="292.4" y1="225.5" x2="290.2" y2="229.3" stroke-opacity="0.62"/><line x1="300.0" y1="196.2" x2="299.0" y2="194.3" stroke-opacity="0.26"/><line x1="332.6" y1="192.0" x2="334.2" y2="191.3" stroke-opacity="0.57"/><line x1="288.7" y1="200.1" x2="286.0" y2="199.4" stroke-opacity="0.39"/><line x1="298.3" y1="187.3" x2="296.8" y2="183.3" stroke-opacity="0.32"/><line x1="298.2" y1="201.7" x2="294.8" y2="200.2" stroke-opacity="0.37"/><line x1="311.7" y1="208.3" x2="314.6" y2="209.8" stroke-opacity="0.70"/><line x1="293.3" y1="187.5" x2="291.9" y2="185.4" stroke-opacity="0.67"/><line x1="308.3" y1="208.0" x2="310.4" y2="209.8" stroke-opacity="0.59"/><line x1="310.8" y1="181.7" x2="311.6" y2="178.9" stroke-opacity="0.61"/><line x1="307.7" y1="202.5" x2="310.7" y2="200.6" stroke-opacity="0.35"/><line x1="314.5" y1="197.8" x2="316.0" y2="196.7" stroke-opacity="0.40"/><line x1="295.7" y1="216.7" x2="294.8" y2="217.9" stroke-opacity="0.48"/><line x1="328.4" y1="223.8" x2="330.4" y2="225.4" stroke-opacity="0.68"/><line x1="309.9" y1="216.4" x2="311.9" y2="220.9" stroke-opacity="0.32"/><line x1="285.7" y1="203.9" x2="283.8" y2="203.9" stroke-opacity="0.63"/><line x1="300.7" y1="204.1" x2="297.0" y2="203.8" stroke-opacity="0.45"/><line x1="302.0" y1="173.9" x2="301.8" y2="171.4" stroke-opacity="0.64"/><line x1="309.7" y1="187.9" x2="311.2" y2="183.2" stroke-opacity="0.28"/></g>
<g stroke="#e4f3a8" stroke-width="0.6"><line x1="285.2" y1="203.5" x2="283.0" y2="203.4" stroke-opacity="0.48"/><line x1="287.3" y1="186.1" x2="286.1" y2="184.8" stroke-opacity="0.39"/><line x1="334.4" y1="201.1" x2="337.6" y2="200.8" stroke-opacity="0.53"/><line x1="306.5" y1="207.4" x2="308.3" y2="210.2" stroke-opacity="0.28"/><line x1="279.8" y1="214.2" x2="276.8" y2="215.4" stroke-opacity="0.54"/><line x1="283.1" y1="204.5" x2="280.0" y2="204.5" stroke-opacity="0.38"/><line x1="300.8" y1="213.1" x2="299.8" y2="215.5" stroke-opacity="0.28"/><line x1="306.1" y1="190.4" x2="306.5" y2="185.9" stroke-opacity="0.42"/><line x1="318.3" y1="195.9" x2="322.4" y2="193.2" stroke-opacity="0.43"/><line x1="323.1" y1="213.6" x2="326.9" y2="215.5" stroke-opacity="0.37"/><line x1="311.9" y1="211.2" x2="313.3" y2="212.4" stroke-opacity="0.28"/><line x1="306.9" y1="196.9" x2="307.9" y2="193.6" stroke-opacity="0.45"/><line x1="315.6" y1="214.4" x2="317.3" y2="215.9" stroke-opacity="0.37"/><line x1="329.7" y1="199.9" x2="332.2" y2="199.4" stroke-opacity="0.65"/><line x1="329.4" y1="222.6" x2="331.2" y2="223.9" stroke-opacity="0.37"/><line x1="306.3" y1="192.4" x2="306.7" y2="189.9" stroke-opacity="0.28"/><line x1="293.7" y1="215.8" x2="290.4" y2="219.3" stroke-opacity="0.47"/><line x1="280.3" y1="192.2" x2="278.4" y2="191.2" stroke-opacity="0.32"/><line x1="302.7" y1="175.2" x2="302.5" y2="173.1" stroke-opacity="0.68"/><line x1="319.3" y1="191.1" x2="321.5" y2="189.1" stroke-opacity="0.30"/><line x1="303.5" y1="230.5" x2="303.3" y2="234.1" stroke-opacity="0.38"/><line x1="315.1" y1="225.2" x2="315.8" y2="226.7" stroke-opacity="0.35"/><line x1="312.2" y1="200.2" x2="313.5" y2="199.4" stroke-opacity="0.37"/><line x1="300.2" y1="206.1" x2="298.2" y2="206.8" stroke-opacity="0.42"/><line x1="325.8" y1="201.9" x2="329.7" y2="201.4" stroke-opacity="0.51"/><line x1="307.1" y1="207.6" x2="308.1" y2="208.8" stroke-opacity="0.66"/><line x1="281.3" y1="207.1" x2="278.7" y2="207.4" stroke-opacity="0.70"/><line x1="320.9" y1="212.8" x2="324.5" y2="214.7" stroke-opacity="0.66"/><line x1="291.4" y1="222.3" x2="288.6" y2="226.0" stroke-opacity="0.64"/><line x1="282.8" y1="217.0" x2="278.9" y2="219.2" stroke-opacity="0.51"/><line x1="322.9" y1="214.6" x2="327.3" y2="217.0" stroke-opacity="0.65"/><line x1="302.7" y1="190.8" x2="302.1" y2="186.7" stroke-opacity="0.51"/><line x1="324.1" y1="208.2" x2="327.2" y2="208.8" stroke-opacity="0.35"/><line x1="299.2" y1="188.5" x2="298.0" y2="185.0" stroke-opacity="0.66"/><line x1="306.9" y1="211.9" x2="308.2" y2="216.4" stroke-opacity="0.55"/><line x1="278.5" y1="214.5" x2="276.0" y2="215.4" stroke-opacity="0.55"/><line x1="314.6" y1="195.1" x2="317.2" y2="192.7" stroke-opacity="0.39"/><line x1="315.7" y1="217.3" x2="318.6" y2="220.6" stroke-opacity="0.63"/><line x1="294.4" y1="207.8" x2="292.3" y2="208.5" stroke-opacity="0.44"/><line x1="292.8" y1="192.5" x2="290.9" y2="190.7" stroke-opacity="0.63"/><line x1="307.5" y1="201.5" x2="310.3" y2="198.7" stroke-opacity="0.51"/><line x1="295.5" y1="228.0" x2="294.9" y2="229.4" stroke-opacity="0.31"/><line x1="307.3" y1="207.8" x2="309.7" y2="210.7" stroke-opacity="0.45"/><line x1="290.0" y1="188.9" x2="287.0" y2="185.8" stroke-opacity="0.68"/><line x1="320.8" y1="205.6" x2="324.8" y2="205.9" stroke-opacity="0.33"/><line x1="302.8" y1="217.1" x2="302.3" y2="221.0" stroke-opacity="0.48"/><line x1="309.1" y1="201.5" x2="313.1" y2="198.8" stroke-opacity="0.58"/><line x1="315.4" y1="215.9" x2="317.9" y2="218.6" stroke-opacity="0.66"/><line x1="319.6" y1="199.0" x2="323.2" y2="197.7" stroke-opacity="0.34"/><line x1="300.1" y1="179.0" x2="299.4" y2="175.3" stroke-opacity="0.57"/><line x1="280.1" y1="198.7" x2="277.6" y2="198.1" stroke-opacity="0.66"/><line x1="312.5" y1="194.5" x2="313.6" y2="193.0" stroke-opacity="0.45"/><line x1="306.3" y1="200.0" x2="307.9" y2="196.0" stroke-opacity="0.33"/><line x1="291.8" y1="226.1" x2="290.8" y2="227.8" stroke-opacity="0.32"/><line x1="320.4" y1="198.9" x2="325.0" y2="197.3" stroke-opacity="0.29"/><line x1="307.8" y1="222.0" x2="308.2" y2="224.4" stroke-opacity="0.58"/><line x1="299.4" y1="217.2" x2="297.7" y2="221.3" stroke-opacity="0.66"/><line x1="311.6" y1="230.4" x2="312.8" y2="235.1" stroke-opacity="0.49"/><line x1="301.6" y1="202.2" x2="297.8" y2="199.2" stroke-opacity="0.48"/><line x1="284.0" y1="219.4" x2="281.2" y2="221.4" stroke-opacity="0.47"/><line x1="332.4" y1="196.8" x2="334.8" y2="196.1" stroke-opacity="0.46"/><line x1="315.2" y1="215.3" x2="318.2" y2="218.5" stroke-opacity="0.66"/><line x1="310.5" y1="201.5" x2="314.3" y2="199.6" stroke-opacity="0.26"/><line x1="307.8" y1="213.3" x2="309.2" y2="217.0" stroke-opacity="0.39"/><line x1="317.0" y1="216.6" x2="318.7" y2="218.2" stroke-opacity="0.34"/><line x1="289.6" y1="201.6" x2="286.9" y2="201.1" stroke-opacity="0.44"/><line x1="293.1" y1="190.9" x2="290.2" y2="187.4" stroke-opacity="0.53"/><line x1="310.5" y1="197.0" x2="313.1" y2="193.8" stroke-opacity="0.61"/><line x1="310.8" y1="234.8" x2="311.2" y2="237.0" stroke-opacity="0.31"/><line x1="306.2" y1="227.8" x2="306.3" y2="230.2" stroke-opacity="0.29"/><line x1="286.4" y1="217.2" x2="285.1" y2="218.1" stroke-opacity="0.34"/><line x1="292.8" y1="178.5" x2="290.9" y2="174.3" stroke-opacity="0.30"/><line x1="306.5" y1="209.1" x2="307.2" y2="210.9" stroke-opacity="0.27"/><line x1="288.1" y1="198.9" x2="284.8" y2="197.8" stroke-opacity="0.32"/><line x1="309.7" y1="202.0" x2="311.2" y2="201.2" stroke-opacity="0.68"/><line x1="280.9" y1="210.3" x2="278.3" y2="210.9" stroke-opacity="0.46"/><line x1="296.5" y1="179.1" x2="295.9" y2="177.1" stroke-opacity="0.45"/><line x1="303.6" y1="190.2" x2="303.5" y2="188.0" stroke-opacity="0.32"/><line x1="297.0" y1="178.5" x2="295.9" y2="174.9" stroke-opacity="0.43"/><line x1="290.7" y1="194.5" x2="286.7" y2="191.6" stroke-opacity="0.61"/><line x1="310.3" y1="191.3" x2="312.1" y2="187.0" stroke-opacity="0.65"/><line x1="296.3" y1="181.5" x2="294.9" y2="177.5" stroke-opacity="0.43"/><line x1="317.5" y1="205.4" x2="321.3" y2="205.6" stroke-opacity="0.53"/><line x1="307.9" y1="233.8" x2="308.3" y2="237.5" stroke-opacity="0.40"/><line x1="325.6" y1="204.5" x2="329.5" y2="204.5" stroke-opacity="0.59"/><line x1="308.2" y1="204.0" x2="311.8" y2="203.6" stroke-opacity="0.58"/><line x1="300.5" y1="208.6" x2="298.8" y2="210.2" stroke-opacity="0.66"/><line x1="288.2" y1="199.2" x2="283.6" y2="197.7" stroke-opacity="0.51"/><line x1="284.8" y1="190.5" x2="283.4" y2="189.6" stroke-opacity="0.67"/><line x1="313.3" y1="218.2" x2="314.4" y2="219.9" stroke-opacity="0.47"/><line x1="285.1" y1="201.2" x2="282.4" y2="200.7" stroke-opacity="0.38"/><line x1="294.1" y1="189.0" x2="292.7" y2="187.0" stroke-opacity="0.57"/><line x1="318.0" y1="224.6" x2="319.5" y2="227.0" stroke-opacity="0.65"/><line x1="304.6" y1="200.1" x2="304.5" y2="195.1" stroke-opacity="0.68"/><line x1="314.3" y1="202.9" x2="317.6" y2="202.3" stroke-opacity="0.67"/><line x1="301.9" y1="188.6" x2="301.0" y2="183.8" stroke-opacity="0.62"/><line x1="305.9" y1="208.8" x2="306.8" y2="212.0" stroke-opacity="0.31"/><line x1="284.3" y1="212.1" x2="281.4" y2="213.2" stroke-opacity="0.37"/><line x1="334.3" y1="204.1" x2="337.8" y2="204.0" stroke-opacity="0.36"/><line x1="325.7" y1="222.9" x2="328.9" y2="225.6" stroke-opacity="0.53"/><line x1="287.2" y1="193.2" x2="283.7" y2="191.0" stroke-opacity="0.34"/><line x1="304.8" y1="234.9" x2="304.8" y2="237.7" stroke-opacity="0.65"/><line x1="300.4" y1="200.4" x2="298.0" y2="198.0" stroke-opacity="0.28"/><line x1="323.4" y1="215.8" x2="326.3" y2="217.6" stroke-opacity="0.53"/><line x1="303.7" y1="178.0" x2="303.7" y2="176.3" stroke-opacity="0.30"/><line x1="312.0" y1="185.4" x2="313.6" y2="181.5" stroke-opacity="0.35"/><line x1="287.1" y1="179.3" x2="285.7" y2="177.2" stroke-opacity="0.50"/><line x1="303.9" y1="175.7" x2="303.8" y2="172.7" stroke-opacity="0.42"/><line x1="289.4" y1="198.0" x2="285.8" y2="196.5" stroke-opacity="0.38"/><line x1="305.4" y1="199.4" x2="305.8" y2="197.2" stroke-opacity="0.55"/><line x1="303.2" y1="211.4" x2="302.6" y2="214.0" stroke-opacity="0.58"/><line x1="300.4" y1="209.2" x2="297.7" y2="212.1" stroke-opacity="0.51"/><line x1="308.4" y1="193.6" x2="309.2" y2="191.1" stroke-opacity="0.43"/><line x1="330.3" y1="193.3" x2="332.5" y2="192.4" stroke-opacity="0.41"/><line x1="311.0" y1="222.2" x2="312.4" y2="226.2" stroke-opacity="0.49"/><line x1="314.3" y1="188.4" x2="315.4" y2="186.6" stroke-opacity="0.59"/><line x1="286.4" y1="199.3" x2="281.7" y2="198.0" stroke-opacity="0.54"/><line x1="306.2" y1="200.0" x2="307.3" y2="196.8" stroke-opacity="0.60"/><line x1="322.5" y1="215.0" x2="324.2" y2="216.0" stroke-opacity="0.59"/><line x1="298.7" y1="196.5" x2="297.4" y2="194.7" stroke-opacity="0.59"/><line x1="326.0" y1="200.2" x2="329.2" y2="199.5" stroke-opacity="0.49"/><line x1="300.5" y1="182.1" x2="299.6" y2="177.4" stroke-opacity="0.43"/><line x1="318.6" y1="180.4" x2="321.1" y2="176.2" stroke-opacity="0.54"/><line x1="282.0" y1="201.1" x2="277.7" y2="200.4" stroke-opacity="0.44"/><line x1="299.1" y1="209.9" x2="297.6" y2="211.5" stroke-opacity="0.44"/><line x1="296.7" y1="233.6" x2="296.3" y2="235.3" stroke-opacity="0.39"/><line x1="319.2" y1="210.5" x2="322.5" y2="211.9" stroke-opacity="0.66"/><line x1="310.5" y1="205.9" x2="312.6" y2="206.4" stroke-opacity="0.35"/><line x1="308.9" y1="214.5" x2="309.8" y2="216.4" stroke-opacity="0.59"/><line x1="297.7" y1="221.5" x2="296.0" y2="225.5" stroke-opacity="0.47"/><line x1="276.1" y1="195.8" x2="273.1" y2="194.8" stroke-opacity="0.35"/><line x1="332.7" y1="213.6" x2="336.2" y2="214.7" stroke-opacity="0.42"/><line x1="299.3" y1="196.4" x2="298.5" y2="195.1" stroke-opacity="0.46"/><line x1="287.1" y1="222.8" x2="284.3" y2="225.7" stroke-opacity="0.52"/><line x1="316.5" y1="191.7" x2="319.0" y2="189.0" stroke-opacity="0.70"/><line x1="302.7" y1="222.4" x2="302.5" y2="224.4" stroke-opacity="0.60"/><line x1="313.8" y1="209.7" x2="317.3" y2="211.7" stroke-opacity="0.29"/><line x1="288.6" y1="206.5" x2="283.8" y2="207.1" stroke-opacity="0.51"/><line x1="309.4" y1="201.7" x2="313.2" y2="199.5" stroke-opacity="0.34"/><line x1="287.5" y1="199.7" x2="285.6" y2="199.2" stroke-opacity="0.62"/><line x1="282.1" y1="209.2" x2="279.4" y2="209.8" stroke-opacity="0.56"/><line x1="315.7" y1="213.2" x2="318.1" y2="215.1" stroke-opacity="0.69"/><line x1="302.2" y1="195.2" x2="301.3" y2="191.8" stroke-opacity="0.46"/><line x1="335.3" y1="206.5" x2="337.7" y2="206.7" stroke-opacity="0.34"/><line x1="300.9" y1="216.4" x2="300.0" y2="219.1" stroke-opacity="0.55"/><line x1="304.3" y1="213.1" x2="304.1" y2="217.1" stroke-opacity="0.40"/><line x1="307.2" y1="199.6" x2="308.1" y2="197.8" stroke-opacity="0.29"/><line x1="294.6" y1="184.0" x2="293.6" y2="182.1" stroke-opacity="0.43"/><line x1="308.2" y1="209.9" x2="309.8" y2="212.3" stroke-opacity="0.28"/><line x1="317.7" y1="197.3" x2="320.6" y2="195.8" stroke-opacity="0.54"/><line x1="301.7" y1="206.3" x2="299.2" y2="207.8" stroke-opacity="0.56"/><line x1="329.5" y1="201.7" x2="333.3" y2="201.2" stroke-opacity="0.52"/><line x1="315.3" y1="212.9" x2="317.8" y2="214.9" stroke-opacity="0.60"/><line x1="313.8" y1="186.6" x2="314.7" y2="184.8" stroke-opacity="0.59"/><line x1="319.0" y1="222.4" x2="322.2" y2="226.2" stroke-opacity="0.48"/><line x1="298.9" y1="178.7" x2="298.4" y2="176.6" stroke-opacity="0.68"/><line x1="284.6" y1="194.1" x2="282.3" y2="192.9" stroke-opacity="0.67"/><line x1="294.3" y1="216.7" x2="293.1" y2="218.2" stroke-opacity="0.69"/><line x1="294.9" y1="200.6" x2="290.6" y2="198.9" stroke-opacity="0.70"/><line x1="312.8" y1="186.4" x2="313.6" y2="184.7" stroke-opacity="0.62"/><line x1="308.6" y1="197.3" x2="310.2" y2="194.3" stroke-opacity="0.28"/><line x1="312.5" y1="206.1" x2="317.3" y2="207.1" stroke-opacity="0.67"/><line x1="290.2" y1="217.8" x2="287.0" y2="220.7" stroke-opacity="0.26"/><line x1="309.6" y1="219.8" x2="310.2" y2="221.7" stroke-opacity="0.42"/><line x1="293.4" y1="199.4" x2="290.0" y2="197.8" stroke-opacity="0.27"/><line x1="301.2" y1="198.3" x2="298.9" y2="194.0" stroke-opacity="0.52"/><line x1="305.8" y1="180.5" x2="306.0" y2="177.3" stroke-opacity="0.70"/><line x1="318.8" y1="181.6" x2="320.3" y2="179.1" stroke-opacity="0.45"/><line x1="278.8" y1="216.2" x2="276.4" y2="217.3" stroke-opacity="0.27"/><line x1="300.3" y1="176.6" x2="299.7" y2="172.6" stroke-opacity="0.52"/><line x1="315.6" y1="215.4" x2="317.9" y2="217.7" stroke-opacity="0.43"/><line x1="325.9" y1="211.7" x2="329.0" y2="212.8" stroke-opacity="0.36"/><line x1="330.1" y1="188.6" x2="332.8" y2="186.9" stroke-opacity="0.64"/><line x1="282.1" y1="216.6" x2="280.1" y2="217.7" stroke-opacity="0.59"/><line x1="317.5" y1="217.2" x2="320.9" y2="220.6" stroke-opacity="0.25"/><line x1="305.0" y1="215.9" x2="305.1" y2="218.5" stroke-opacity="0.28"/><line x1="300.9" y1="202.3" x2="299.5" y2="201.5" stroke-opacity="0.65"/><line x1="298.6" y1="220.3" x2="296.9" y2="224.8" stroke-opacity="0.69"/><line x1="311.4" y1="199.4" x2="314.9" y2="196.7" stroke-opacity="0.41"/><line x1="296.9" y1="205.8" x2="292.4" y2="206.6" stroke-opacity="0.70"/><line x1="310.3" y1="206.3" x2="314.1" y2="207.6" stroke-opacity="0.39"/><line x1="326.8" y1="188.5" x2="330.0" y2="186.1" stroke-opacity="0.31"/><line x1="306.5" y1="215.9" x2="307.2" y2="219.9" stroke-opacity="0.34"/><line x1="308.6" y1="213.2" x2="310.2" y2="216.7" stroke-opacity="0.61"/><line x1="306.1" y1="215.8" x2="306.7" y2="220.5" stroke-opacity="0.55"/><line x1="301.1" y1="225.1" x2="300.8" y2="226.9" stroke-opacity="0.69"/><line x1="295.7" y1="198.1" x2="293.8" y2="196.7" stroke-opacity="0.61"/><line x1="314.0" y1="210.2" x2="317.5" y2="212.4" stroke-opacity="0.36"/><line x1="308.5" y1="204.2" x2="311.6" y2="204.0" stroke-opacity="0.59"/><line x1="282.9" y1="223.7" x2="280.4" y2="225.9" stroke-opacity="0.33"/><line x1="308.2" y1="187.4" x2="308.9" y2="184.2" stroke-opacity="0.63"/><line x1="297.5" y1="188.4" x2="295.6" y2="184.0" stroke-opacity="0.33"/><line x1="281.7" y1="213.5" x2="277.7" y2="215.1" stroke-opacity="0.61"/><line x1="306.1" y1="221.1" x2="306.3" y2="223.4" stroke-opacity="0.51"/><line x1="280.0" y1="192.4" x2="278.1" y2="191.5" stroke-opacity="0.32"/><line x1="321.4" y1="206.4" x2="324.4" y2="206.7" stroke-opacity="0.45"/><line x1="288.1" y1="196.9" x2="284.2" y2="195.1" stroke-opacity="0.36"/><line x1="311.7" y1="213.8" x2="312.7" y2="215.1" stroke-opacity="0.39"/><line x1="326.7" y1="218.2" x2="328.4" y2="219.3" stroke-opacity="0.36"/><line x1="316.6" y1="223.3" x2="319.0" y2="227.1" stroke-opacity="0.60"/><line x1="308.7" y1="203.7" x2="311.9" y2="203.1" stroke-opacity="0.59"/><line x1="311.6" y1="203.9" x2="314.7" y2="203.6" stroke-opacity="0.59"/><line x1="295.7" y1="211.6" x2="293.4" y2="213.4" stroke-opacity="0.28"/><line x1="334.8" y1="211.1" x2="337.0" y2="211.6" stroke-opacity="0.58"/><line x1="276.3" y1="211.5" x2="273.6" y2="212.1" stroke-opacity="0.40"/><line x1="324.6" y1="202.1" x2="326.2" y2="201.9" stroke-opacity="0.43"/><line x1="317.5" y1="189.8" x2="320.5" y2="186.3" stroke-opacity="0.46"/><line x1="283.8" y1="221.1" x2="281.6" y2="222.8" stroke-opacity="0.60"/><line x1="309.1" y1="212.0" x2="310.2" y2="213.9" stroke-opacity="0.46"/><line x1="299.0" y1="219.0" x2="297.2" y2="223.6" stroke-opacity="0.56"/><line x1="299.9" y1="192.2" x2="299.0" y2="189.9" stroke-opacity="0.26"/><line x1="308.9" y1="213.9" x2="310.1" y2="216.5" stroke-opacity="0.67"/><line x1="316.7" y1="199.4" x2="320.5" y2="197.8" stroke-opacity="0.58"/><line x1="307.6" y1="202.5" x2="309.8" y2="201.1" stroke-opacity="0.42"/><line x1="300.1" y1="204.0" x2="297.2" y2="203.6" stroke-opacity="0.36"/><line x1="311.6" y1="206.3" x2="315.1" y2="207.2" stroke-opacity="0.26"/><line x1="301.8" y1="194.6" x2="300.7" y2="190.7" stroke-opacity="0.55"/><line x1="309.9" y1="211.5" x2="311.4" y2="213.5" stroke-opacity="0.57"/><line x1="301.3" y1="216.7" x2="300.7" y2="218.9" stroke-opacity="0.27"/><line x1="325.0" y1="207.7" x2="328.4" y2="208.2" stroke-opacity="0.61"/><line x1="309.3" y1="226.3" x2="310.1" y2="230.0" stroke-opacity="0.68"/><line x1="311.1" y1="197.5" x2="313.6" y2="194.7" stroke-opacity="0.29"/><line x1="296.6" y1="219.4" x2="295.4" y2="221.6" stroke-opacity="0.32"/><line x1="291.3" y1="213.9" x2="289.6" y2="215.1" stroke-opacity="0.55"/><line x1="315.9" y1="220.2" x2="318.2" y2="223.4" stroke-opacity="0.50"/><line x1="303.5" y1="201.0" x2="302.6" y2="198.3" stroke-opacity="0.41"/><line x1="290.8" y1="196.2" x2="288.5" y2="194.9" stroke-opacity="0.36"/><line x1="317.2" y1="206.4" x2="321.8" y2="207.1" stroke-opacity="0.50"/><line x1="282.3" y1="184.8" x2="280.3" y2="183.0" stroke-opacity="0.51"/><line x1="327.6" y1="195.8" x2="331.1" y2="194.5" stroke-opacity="0.53"/><line x1="314.6" y1="195.1" x2="318.0" y2="191.9" stroke-opacity="0.27"/><line x1="315.9" y1="217.5" x2="317.6" y2="219.4" stroke-opacity="0.41"/><line x1="300.5" y1="195.8" x2="299.9" y2="194.5" stroke-opacity="0.49"/><line x1="297.0" y1="210.5" x2="294.4" y2="212.5" stroke-opacity="0.54"/><line x1="316.7" y1="202.1" x2="319.4" y2="201.6" stroke-opacity="0.65"/><line x1="295.7" y1="225.7" x2="294.1" y2="229.4" stroke-opacity="0.56"/><line x1="285.8" y1="205.6" x2="283.1" y2="205.8" stroke-opacity="0.38"/><line x1="304.5" y1="186.5" x2="304.5" y2="184.2" stroke-opacity="0.36"/><line x1="309.1" y1="206.4" x2="310.9" y2="207.1" stroke-opacity="0.57"/><line x1="316.5" y1="214.7" x2="319.7" y2="217.4" stroke-opacity="0.47"/><line x1="304.2" y1="221.7" x2="304.1" y2="226.0" stroke-opacity="0.43"/><line x1="302.5" y1="194.7" x2="301.6" y2="190.8" stroke-opacity="0.40"/><line x1="291.1" y1="198.4" x2="287.5" y2="196.8" stroke-opacity="0.53"/><line x1="317.0" y1="182.3" x2="317.9" y2="180.6" stroke-opacity="0.42"/><line x1="279.4" y1="189.5" x2="276.1" y2="187.5" stroke-opacity="0.31"/><line x1="299.0" y1="190.9" x2="297.5" y2="187.4" stroke-opacity="0.43"/><line x1="307.7" y1="207.3" x2="309.5" y2="209.0" stroke-opacity="0.58"/><line x1="311.0" y1="204.2" x2="313.6" y2="204.1" stroke-opacity="0.26"/><line x1="312.9" y1="179.3" x2="313.6" y2="177.0" stroke-opacity="0.43"/><line x1="286.6" y1="188.0" x2="282.9" y2="184.7" stroke-opacity="0.43"/><line x1="307.3" y1="209.8" x2="309.5" y2="214.1" stroke-opacity="0.36"/><line x1="298.2" y1="205.0" x2="295.6" y2="205.2" stroke-opacity="0.26"/><line x1="306.9" y1="220.8" x2="307.3" y2="223.6" stroke-opacity="0.37"/><line x1="309.2" y1="206.0" x2="313.5" y2="207.5" stroke-opacity="0.39"/><line x1="312.7" y1="230.6" x2="313.6" y2="233.6" stroke-opacity="0.44"/><line x1="309.5" y1="191.3" x2="310.1" y2="189.7" stroke-opacity="0.50"/><line x1="324.9" y1="181.3" x2="326.5" y2="179.5" stroke-opacity="0.63"/><line x1="303.4" y1="196.7" x2="303.1" y2="195.1" stroke-opacity="0.33"/><line x1="298.2" y1="220.7" x2="297.6" y2="222.1" stroke-opacity="0.34"/><line x1="307.8" y1="203.7" x2="311.0" y2="202.8" stroke-opacity="0.61"/><line x1="316.1" y1="182.9" x2="318.4" y2="178.5" stroke-opacity="0.30"/><line x1="318.2" y1="200.1" x2="322.0" y2="198.9" stroke-opacity="0.36"/><line x1="294.4" y1="213.1" x2="291.5" y2="215.6" stroke-opacity="0.61"/><line x1="290.8" y1="220.2" x2="289.0" y2="222.2" stroke-opacity="0.38"/><line x1="304.1" y1="195.6" x2="303.9" y2="191.5" stroke-opacity="0.50"/><line x1="301.2" y1="197.3" x2="300.4" y2="195.6" stroke-opacity="0.31"/><line x1="294.7" y1="211.3" x2="292.0" y2="213.3" stroke-opacity="0.68"/><line x1="312.4" y1="231.0" x2="313.1" y2="233.6" stroke-opacity="0.59"/><line x1="307.3" y1="218.7" x2="308.1" y2="222.6" stroke-opacity="0.33"/><line x1="301.4" y1="226.2" x2="300.7" y2="231.0" stroke-opacity="0.40"/><line x1="295.6" y1="194.3" x2="293.1" y2="191.5" stroke-opacity="0.35"/><line x1="283.9" y1="185.9" x2="280.5" y2="182.9" stroke-opacity="0.53"/><line x1="298.8" y1="189.9" x2="297.4" y2="186.4" stroke-opacity="0.44"/><line x1="297.5" y1="210.8" x2="294.8" y2="213.1" stroke-opacity="0.51"/><line x1="288.2" y1="193.6" x2="284.3" y2="191.0" stroke-opacity="0.32"/><line x1="274.4" y1="210.5" x2="272.0" y2="211.0" stroke-opacity="0.39"/><line x1="326.1" y1="226.5" x2="327.8" y2="228.2" stroke-opacity="0.36"/><line x1="316.0" y1="186.6" x2="318.5" y2="182.6" stroke-opacity="0.62"/><line x1="320.3" y1="187.8" x2="321.9" y2="186.1" stroke-opacity="0.61"/><line x1="287.3" y1="209.6" x2="283.0" y2="210.9" stroke-opacity="0.34"/></g>
<g stroke="#eaf6c0" stroke-width="1.1" stroke-opacity="0.75"><line x1="304.86" y1="202.01" x2="308.00" y2="172.18"/><line x1="302.83" y1="202.73" x2="281.62" y2="181.52"/><line x1="302.10" y1="204.50" x2="272.10" y2="204.50"/><line x1="302.50" y1="205.86" x2="277.34" y2="222.20"/><line x1="304.04" y1="206.94" x2="297.29" y2="236.17"/><line x1="305.73" y1="206.73" x2="319.35" y2="233.46"/><line x1="306.81" y1="205.67" x2="333.30" y2="219.76"/><line x1="307.10" y1="204.50" x2="337.10" y2="204.50"/><line x1="306.60" y1="203.00" x2="330.56" y2="184.94"/></g>
<circle cx="304.6" cy="204.5" r="2" fill="#f0f8d8"/>
</svg>

<!-- scrollbars -->
<div class="a" style="left:516px;top:24.5px;width:6.5px;height:394px;background:#474747"></div>
<div class="a" style="left:517px;top:219px;width:5px;height:10px;background:#5a5a5a;border-radius:2px"></div>
<div class="a" style="left:522.5px;top:12px;width:1.5px;height:415px;background:#3c3c3c"></div>

<!-- hint + status -->
<div class="a" style="left:31px;top:409px;width:485px;height:9.5px;background:#535353"></div>
<div class="a" style="left:31px;top:418.5px;width:491.5px;height:7.5px;background:#4b4b4b"></div>
<div class="a" style="left:0;top:426px;width:670px;height:1px;background:#3a3a3a"></div>
<svg class="a" style="left:30px;top:405px" width="500" height="22" viewBox="30 405 500 22">
<circle cx="36" cy="413.7" r="3" fill="#dedede"/>
<path d="M35.1 412.7 Q35.1 411.5 36.1 411.5 Q37.1 411.5 37.1 412.5 Q37.1 413.2 36.2 413.7 V414.5" fill="none" stroke="#5a5a5a" stroke-width="0.75"/>
<rect x="35.85" y="415" width="0.75" height="0.75" fill="#5a5a5a"/>
<g transform="translate(0 0.9)"><rect x="33" y="419.2" width="25.5" height="6.6" fill="#474747"/>
<rect x="63" y="419.2" width="25.5" height="6.6" fill="#474747"/>
<rect x="108" y="419.2" width="25" height="6.6" fill="#474747"/>
<g fill="none" stroke="#c8c8c8" stroke-width="0.7"><path d="M55.8 421.6 L57 422.8 L58.2 421.6"/><path d="M86.2 421.6 L87.4 422.8 L88.6 421.6"/><path d="M129 421.6 L130.2 422.8 L131.4 421.6"/></g>
<g fill="#7a7a7a"><rect x="95" y="420.8" width="0.6" height="3.4"/><path d="M98.2 420.8 V424.2 L96.2 422.5 Z"/><path d="M105 420.8 V424.2 L103 422.5 Z"/><path d="M137 420.8 V424.2 L139 422.5 Z"/><path d="M144.4 420.8 V424.2 L146.4 422.5 Z"/><rect x="146.8" y="420.8" width="0.6" height="3.4"/></g>
</g><path d="M238 421.4 V425.4 L240.6 423.4 Z" fill="#d8d8d8"/>
<rect x="243" y="418.5" width="273" height="7.5" fill="#434343"/>
<path d="M248.6 421 L247.2 422.5 L248.6 424" fill="none" stroke="#9a9a9a" stroke-width="0.6"/>
<path d="M511.2 421 L512.6 422.5 L511.2 424" fill="none" stroke="#9a9a9a" stroke-width="0.6"/>
<rect x="373" y="420.2" width="11.5" height="4.8" rx="2.4" fill="#5a5a5a"/>
<path d="M517.8 414.2 L519.4 415.6 L521 414.2" fill="none" stroke="#9a9a9a" stroke-width="0.6"/>
</svg>
<div class="t" style="left:43.5px;top:411.6px;font-size:4.9px;color:#d4d4d4;transform:scaleX(0.86);transform-origin:0 0">Select the 'Question mark' icon to learn how to use the tool.</div>
<div class="t" style="left:34px;top:421.3px;font-size:4.9px;color:#d0d0d0;transform:scaleX(0.88);transform-origin:0 0">50%</div>
<div class="t" style="left:64px;top:421.3px;font-size:4.9px;color:#d0d0d0;transform:scaleX(0.88);transform-origin:0 0">0°</div>
<div class="t" style="left:110.5px;top:421.3px;font-size:4.9px;color:#d0d0d0;transform:scaleX(0.88);transform-origin:0 0">1</div>
<div class="t" style="left:178px;top:421.5px;font-size:4.9px;color:#d0d0d0;transform:scaleX(0.86);transform-origin:0 0">Toggle Selection</div>
<svg class="a" style="left:580px;top:417px" width="90" height="10" viewBox="580 417 90 10">
<g fill="none" stroke="#c8c8c8" stroke-width="0.7">
<rect x="586.5" y="420" width="4.6" height="4"/><path d="M585.8 420 H592 M585.8 424 H592"/>
<path d="M602 420.4 H600 V424.6 H604.4 V422.6 M602.4 422.2 L605.6 419 M603.8 419 H605.6 V420.8"/>
</g>
<g fill="none" stroke="#7d7d7d" stroke-width="0.7"><circle cx="611.6" cy="421.8" r="1.6"/><path d="M612.8 423 L614 424.2"/><rect x="620.6" y="420" width="4.4" height="4"/><path d="M630 422 H634.8 M631.4 420.6 L630 422 L631.4 423.4"/></g>
<g fill="none" stroke="#c8c8c8" stroke-width="0.7"><rect x="642.4" y="419.6" width="4.6" height="5"/><path d="M644.7 421 V423.2 M643.6 422.1 H645.8"/><path d="M653.6 420.6 H658.6 M654.4 420.6 L654.8 424.8 H657.4 L657.8 420.6 M655.2 420.6 V419.8 H657 V420.6"/></g>
</svg>

<!-- right panel -->
<div class="a" style="left:524px;top:12.2px;width:146px;height:4.8px;background:#3d3d3d"></div>
<div class="a" style="left:524px;top:17px;width:146px;height:12.5px;background:#454545"></div>
<div class="a" style="left:524px;top:31px;width:146px;height:13px;background:#4d4d4d"></div>
<div class="a" style="left:600px;top:34px;width:54.5px;height:8.5px;background:#414141"></div>
<div class="a" style="left:524px;top:44px;width:146px;height:0.8px;background:#474747"></div>
<div class="a" style="left:524px;top:56px;width:146px;height:0.8px;background:#474747"></div>
<div class="a" style="left:524px;top:67.3px;width:146px;height:0.8px;background:#474747"></div>
<div class="a" style="left:640px;top:73px;width:27px;height:9.5px;background:#4a5d74"></div>
<div class="a" style="left:666.6px;top:31px;width:0.8px;height:60px;background:#474747"></div>
<div class="a" style="left:667px;top:12px;width:0.8px;height:415px;background:#474747"></div>
<svg class="a" style="left:640px;top:12px" width="30" height="45" viewBox="640 12 30 45">
<g fill="#bdbdbd"><path d="M665.4 13.8 L666.6 15 L665.4 16.2 Z"/><path d="M667 13.8 L668.2 15 L667 16.2 Z"/></g>
<g fill="#8f8f8f"><rect x="663.6" y="22.3" width="4.6" height="0.8"/><rect x="663.6" y="23.7" width="4.6" height="0.8"/><rect x="663.6" y="25.1" width="4.6" height="0.8"/></g>
<path d="M660 35.6 H665.6 L663.5 38.4 V41 L662.1 40.2 V38.4 Z" fill="#c8c8c8"/>
<circle cx="657" cy="51" r="1.9" fill="none" stroke="#bdbdbd" stroke-width="0.7"/>
</svg>
<div class="a" style="left:524px;top:416.8px;width:146px;height:0.9px;background:#474747"></div>
<div class="t" style="left:525.5px;top:420.3px;font-size:5px;color:#d4d4d4;transform:scaleX(0.86);transform-origin:0 0">5 Layers</div>

<!-- magnifier -->
<div class="a" id="mag" style="left:458px;top:2px;width:209px;height:209px;border-radius:50%;overflow:hidden;background:#535353">
  <div class="a" style="left:-458px;top:-2px;width:670px;height:427px">
    <!-- magnified menubar -->
    <div class="a" style="left:440px;top:0;width:230px;height:22px;background:#535353"></div>
    <div class="a" style="left:506.5px;top:6px;width:16px;height:16px;border-radius:50%;background:#1a73e8"></div>
    <svg class="a" style="left:528px;top:9px" width="11" height="11" viewBox="0 0 11 11"><path d="M4.5 2.2 C2.6 2.6 2.4 4.3 2.4 6 L1.3 8.2 H8.7 L7.6 6 C7.6 4.3 7.4 2.6 5.5 2.2 Z" fill="#b4b4b4"/><rect x="4.2" y="8.6" width="1.6" height="1.4" fill="#b4b4b4"/><circle cx="8" cy="2.2" r="2.1" fill="#1a73e8"/></svg>
    <svg class="a" style="left:546px;top:8px" width="11" height="12" viewBox="0 0 11 12"><circle cx="4.8" cy="5" r="3.3" fill="none" stroke="#c8c8c8" stroke-width="1.2"/><path d="M7.2 7.5 L9.8 10.4" stroke="#c8c8c8" stroke-width="1.3"/></svg>
    <div class="a" style="left:564px;top:9px;width:1px;height:11px;background:#474747"></div>
    <svg class="a" style="left:576px;top:11px" width="12" height="8" viewBox="0 0 12 8"><rect x="0.5" y="0.5" width="4.5" height="7" fill="#d0d0d0"/><rect x="6" y="0.5" width="5" height="3" fill="#d0d0d0"/><rect x="6" y="4.5" width="5" height="3" fill="#d0d0d0"/></svg>
    <svg class="a" style="left:596px;top:11px" width="11" height="9" viewBox="0 0 11 9"><rect x="0.7" y="0.7" width="9.6" height="7.6" fill="none" stroke="#b8b8b8" stroke-width="1.2"/><rect x="0.7" y="0.7" width="2.5" height="7.6" fill="#b8b8b8"/></svg>
    <!-- dark band -->
    <div class="a" style="left:440px;top:22px;width:230px;height:8.5px;background:#3f3f3f"></div>
    <!-- tabs row -->
    <div class="a" style="left:440px;top:30.5px;width:230px;height:15.5px;background:#474747"></div>
    <div class="a" style="left:497.8px;top:30.5px;width:1px;height:15.5px;background:#3d3d3d"></div>
    <div class="a" style="left:529.5px;top:30.5px;width:1px;height:15.5px;background:#3d3d3d"></div>
    <div class="a" style="left:563.5px;top:30.5px;width:1px;height:15.5px;background:#3d3d3d"></div>
    <div class="t" style="left:466px;top:34.5px;font-size:6px;color:#cccccc;-webkit-text-stroke:0.15px #cccccc">Properties</div>
    <div class="t" style="left:505px;top:34.5px;font-size:6px;color:#cccccc;-webkit-text-stroke:0.15px #cccccc">Retype</div>
    <div class="t" style="left:535px;top:34.5px;font-size:6px;color:#cccccc;-webkit-text-stroke:0.15px #cccccc">Libraries</div>
    <div class="a" style="left:564.5px;top:30.5px;width:26.5px;height:16px;background:#535353"></div>
    <div class="t" style="left:569px;top:34.5px;font-size:5.6px;font-weight:bold;color:#f0f0f0">Layers</div>
    <div class="a" style="left:592px;top:31px;width:58px;height:15.5px;background:#3f3f3f"></div>
    <!-- band -->
    <div class="a" style="left:440px;top:46px;width:230px;height:6.5px;background:#4d4d4d"></div>
    <div class="a" style="left:440px;top:46px;width:230px;height:1px;background:#424242"></div>
    <!-- search -->
    <div class="a" style="left:440px;top:52.5px;width:203px;height:13.5px;background:#434343"></div>
    <svg class="a" style="left:470px;top:57.6px" width="8" height="8" viewBox="0 0 8 8"><circle cx="5" cy="3" r="2.2" fill="none" stroke="#777" stroke-width="0.9"/><path d="M3.4 4.6 L1 7" stroke="#777" stroke-width="1"/></svg>
    <div class="t" style="left:483px;top:56.8px;font-size:6.6px;color:#666666">Search All</div>
    <div class="a" style="left:440px;top:66px;width:230px;height:4.5px;background:#4d4d4d"></div>
    <!-- rows -->
    <div class="a" style="left:440px;top:70.5px;width:230px;height:62px;background:#535353"></div>
    <div class="a" style="left:440px;top:107.5px;width:230px;height:25px;background:#4a5d74"></div>
    <div class="a" style="left:440px;top:70px;width:230px;height:0.8px;background:#474747"></div>
    <div class="a" style="left:440px;top:82.4px;width:230px;height:0.8px;background:#474747"></div>
    <div class="a" style="left:440px;top:94.8px;width:230px;height:0.8px;background:#474747"></div>
    <div class="a" style="left:440px;top:107.2px;width:230px;height:0.8px;background:#474747"></div>
    <div class="a" style="left:440px;top:119.8px;width:230px;height:0.8px;background:#3f4f63"></div>
    <div class="a" style="left:440px;top:132.2px;width:230px;height:0.8px;background:#474747"></div>
    <div class="a" style="left:475.5px;top:70.5px;width:0.8px;height:62px;background:#474747"></div>
    <div class="a" style="left:639.3px;top:70.5px;width:0.8px;height:62px;background:#474747"></div>
    <div class="a" style="left:659.5px;top:70.5px;width:0.8px;height:62px;background:#474747"></div>
    <!-- eye -->
    <svg class="a" style="left:464px;top:98.5px" width="10" height="6" viewBox="0 0 10 6"><path d="M0.6 3 Q5 -1.2 9.4 3 Q5 7.2 0.6 3 Z" fill="none" stroke="#c8c8c8" stroke-width="0.9"/><circle cx="5" cy="3" r="1.2" fill="#c8c8c8"/></svg>
    <!-- color bars -->
    <div class="a" style="left:487.7px;top:72px;width:2.4px;height:10.5px;background:#3fd7f0"><div class="a" style="left:1.5px;top:0;width:0.9px;height:10.5px;background:repeating-linear-gradient(180deg,#ffffff 0 0.7px,transparent 0.7px 1.6px);opacity:.8"></div></div>
    <div class="a" style="left:487.7px;top:84.5px;width:2.4px;height:10.5px;background:#e24fd8"><div class="a" style="left:1.5px;top:0;width:0.9px;height:10.5px;background:repeating-linear-gradient(180deg,#ffffff 0 0.7px,transparent 0.7px 1.6px);opacity:.6"></div></div>
    <div class="a" style="left:487.7px;top:97px;width:2.4px;height:10.5px;background:linear-gradient(90deg,#3ed23e,#9be04a)"></div>
    <div class="a" style="left:487.7px;top:109.5px;width:2.4px;height:10.5px;background:#4646ec"></div>
    <div class="a" style="left:487.7px;top:122px;width:2.4px;height:10.5px;background:#e24fd8"><div class="a" style="left:1.5px;top:0;width:0.9px;height:10.5px;background:repeating-linear-gradient(180deg,#ffffff 0 0.7px,transparent 0.7px 1.6px);opacity:.6"></div></div>
    <!-- chevrons -->
    <svg class="a" style="left:494.5px;top:73.9px" width="5" height="7" viewBox="0 0 5 7"><path d="M1.3 1.1 L3.6 3.5 L1.3 5.9" fill="none" stroke="#dadada" stroke-width="1.1"/></svg>
    <svg class="a" style="left:494.5px;top:86.3px" width="5" height="7" viewBox="0 0 5 7"><path d="M1.3 1.1 L3.6 3.5 L1.3 5.9" fill="none" stroke="#dadada" stroke-width="1.1"/></svg>
    <svg class="a" style="left:494.5px;top:98.7px" width="5" height="7" viewBox="0 0 5 7"><path d="M1.3 1.1 L3.6 3.5 L1.3 5.9" fill="none" stroke="#dadada" stroke-width="1.1"/></svg>
    <svg class="a" style="left:494.5px;top:111.1px" width="5" height="7" viewBox="0 0 5 7"><path d="M1.3 1.1 L3.6 3.5 L1.3 5.9" fill="none" stroke="#dadada" stroke-width="1.1"/></svg>
    <svg class="a" style="left:494.5px;top:123.5px" width="5" height="7" viewBox="0 0 5 7"><path d="M1.3 1.1 L3.6 3.5 L1.3 5.9" fill="none" stroke="#dadada" stroke-width="1.1"/></svg>
    <!-- thumbs -->
    <div class="a" style="left:504.8px;top:71.8px;width:11.2px;height:10.8px;background:#fff;border:0.9px solid #262626;border-radius:1px"><div class="a" style="left:0;top:4.4px;width:9.4px;height:2.5px;background:#2a9be0"></div><div class="a" style="left:4px;top:2.4px;width:1.2px;height:1px;background:#7cc4ee"></div></div>
    <div class="a" style="left:504.8px;top:84.2px;width:11.2px;height:10.8px;background:#fff;border:0.9px solid #262626;border-radius:1px"><div class="a" style="left:0;top:5px;width:9.4px;height:2.4px;background:#e4007f"></div><div class="a" style="left:3.5px;top:2.8px;width:2.4px;height:0.9px;background:#f4a8cc"></div></div>
    <div class="a" style="left:504.8px;top:96.6px;width:11.2px;height:10.8px;background:#fff;border:0.9px solid #262626;border-radius:1px"><div class="a" style="left:0;top:1.6px;width:9.4px;height:6.2px;background:#b3cb12"></div><div class="a" style="left:4.2px;top:4.4px;width:1px;height:0.8px;background:#e8f0b0"></div></div>
    <div class="a" style="left:504.8px;top:109px;width:11.2px;height:10.8px;background:#fafafa;border:0.9px solid #262626;border-radius:1px"><div class="a" style="left:0.6px;top:4px;width:1.6px;height:2px;background:#333"></div><div class="a" style="left:2.4px;top:4.6px;width:1.6px;height:1.4px;background:#2e8a6a"></div><div class="a" style="left:4px;top:5.2px;width:1px;height:1px;background:#6f9fd8"></div><div class="a" style="left:8px;top:2.6px;width:1px;height:4.6px;background:#e4f0a8"></div></div>
    <div class="a" style="left:504.8px;top:121.4px;width:11.2px;height:10.8px;background:#fafafa;border:0.9px solid #262626;border-radius:1px"><div class="a" style="left:0.6px;top:3px;width:2.2px;height:3.6px;background:#555"></div><div class="a" style="left:3.2px;top:2.6px;width:1.2px;height:3.4px;background:#222"></div><div class="a" style="left:5px;top:3px;width:1.6px;height:1.8px;background:#333"></div><div class="a" style="left:7px;top:2.8px;width:1.6px;height:2.6px;background:#2a2a2a"></div></div>
    <!-- names -->
    <div class="t" style="left:519px;top:76.1px;font-size:5.85px;color:#dcdcdc;-webkit-text-stroke:0.12px #dcdcdc;transform:scaleY(1.12);transform-origin:0 100%">Gloss Layer (What will be Glossy)</div>
    <div class="t" style="left:519px;top:88.5px;font-size:5.85px;color:#dcdcdc;-webkit-text-stroke:0.12px #dcdcdc;transform:scaleY(1.15);transform-origin:0 100%">BaseWhite Layer (What will NOT be ...</div>
    <div class="t" style="left:519px;top:100.9px;font-size:5.85px;color:#dcdcdc;-webkit-text-stroke:0.12px #dcdcdc;transform:scaleY(1.15);transform-origin:0 100%">Artwork Layer (Insert your Design he...</div>
    <div class="t" style="left:519px;top:113.3px;font-size:5.85px;color:#dcdcdc;-webkit-text-stroke:0.12px #dcdcdc;transform:scaleY(1.15);transform-origin:0 100%">Instructions (Can be deleted)</div>
    <div class="t" style="left:519px;top:125.7px;font-size:5.85px;color:#dcdcdc;-webkit-text-stroke:0.12px #dcdcdc;transform:scaleY(1.15);transform-origin:0 100%">Technical Instructions (Can be deleted)</div>
    <!-- visibility circles -->
    <div class="a" style="left:643px;top:74.3px;width:4.8px;height:4.8px;border:0.9px solid #c8c8c8;border-radius:50%"></div>
    <div class="a" style="left:643px;top:86.7px;width:4.8px;height:4.8px;border:0.9px solid #c8c8c8;border-radius:50%"></div>
    <div class="a" style="left:643px;top:99.1px;width:4.8px;height:4.8px;border:0.9px solid #c8c8c8;border-radius:50%"></div>
    <div class="a" style="left:643px;top:111.5px;width:4.8px;height:4.8px;border:0.9px solid #c8c8c8;border-radius:50%"></div>
    <div class="a" style="left:643px;top:123.9px;width:4.8px;height:4.8px;border:0.9px solid #c8c8c8;border-radius:50%"></div>
    <svg class="a" style="left:656px;top:119px" width="5" height="5" viewBox="0 0 5 5"><path d="M0.5 0.5 H4.5 V4.5 Z" fill="#d8d8d8"/></svg>
  </div>
</div>
<div class="a" style="left:455.5px;top:-0.5px;width:214.1px;height:214.1px;border-radius:50%;border:6.7px solid #efefef;box-shadow:2px 4px 9px rgba(0,0,0,.34)"></div>

</body></html>
